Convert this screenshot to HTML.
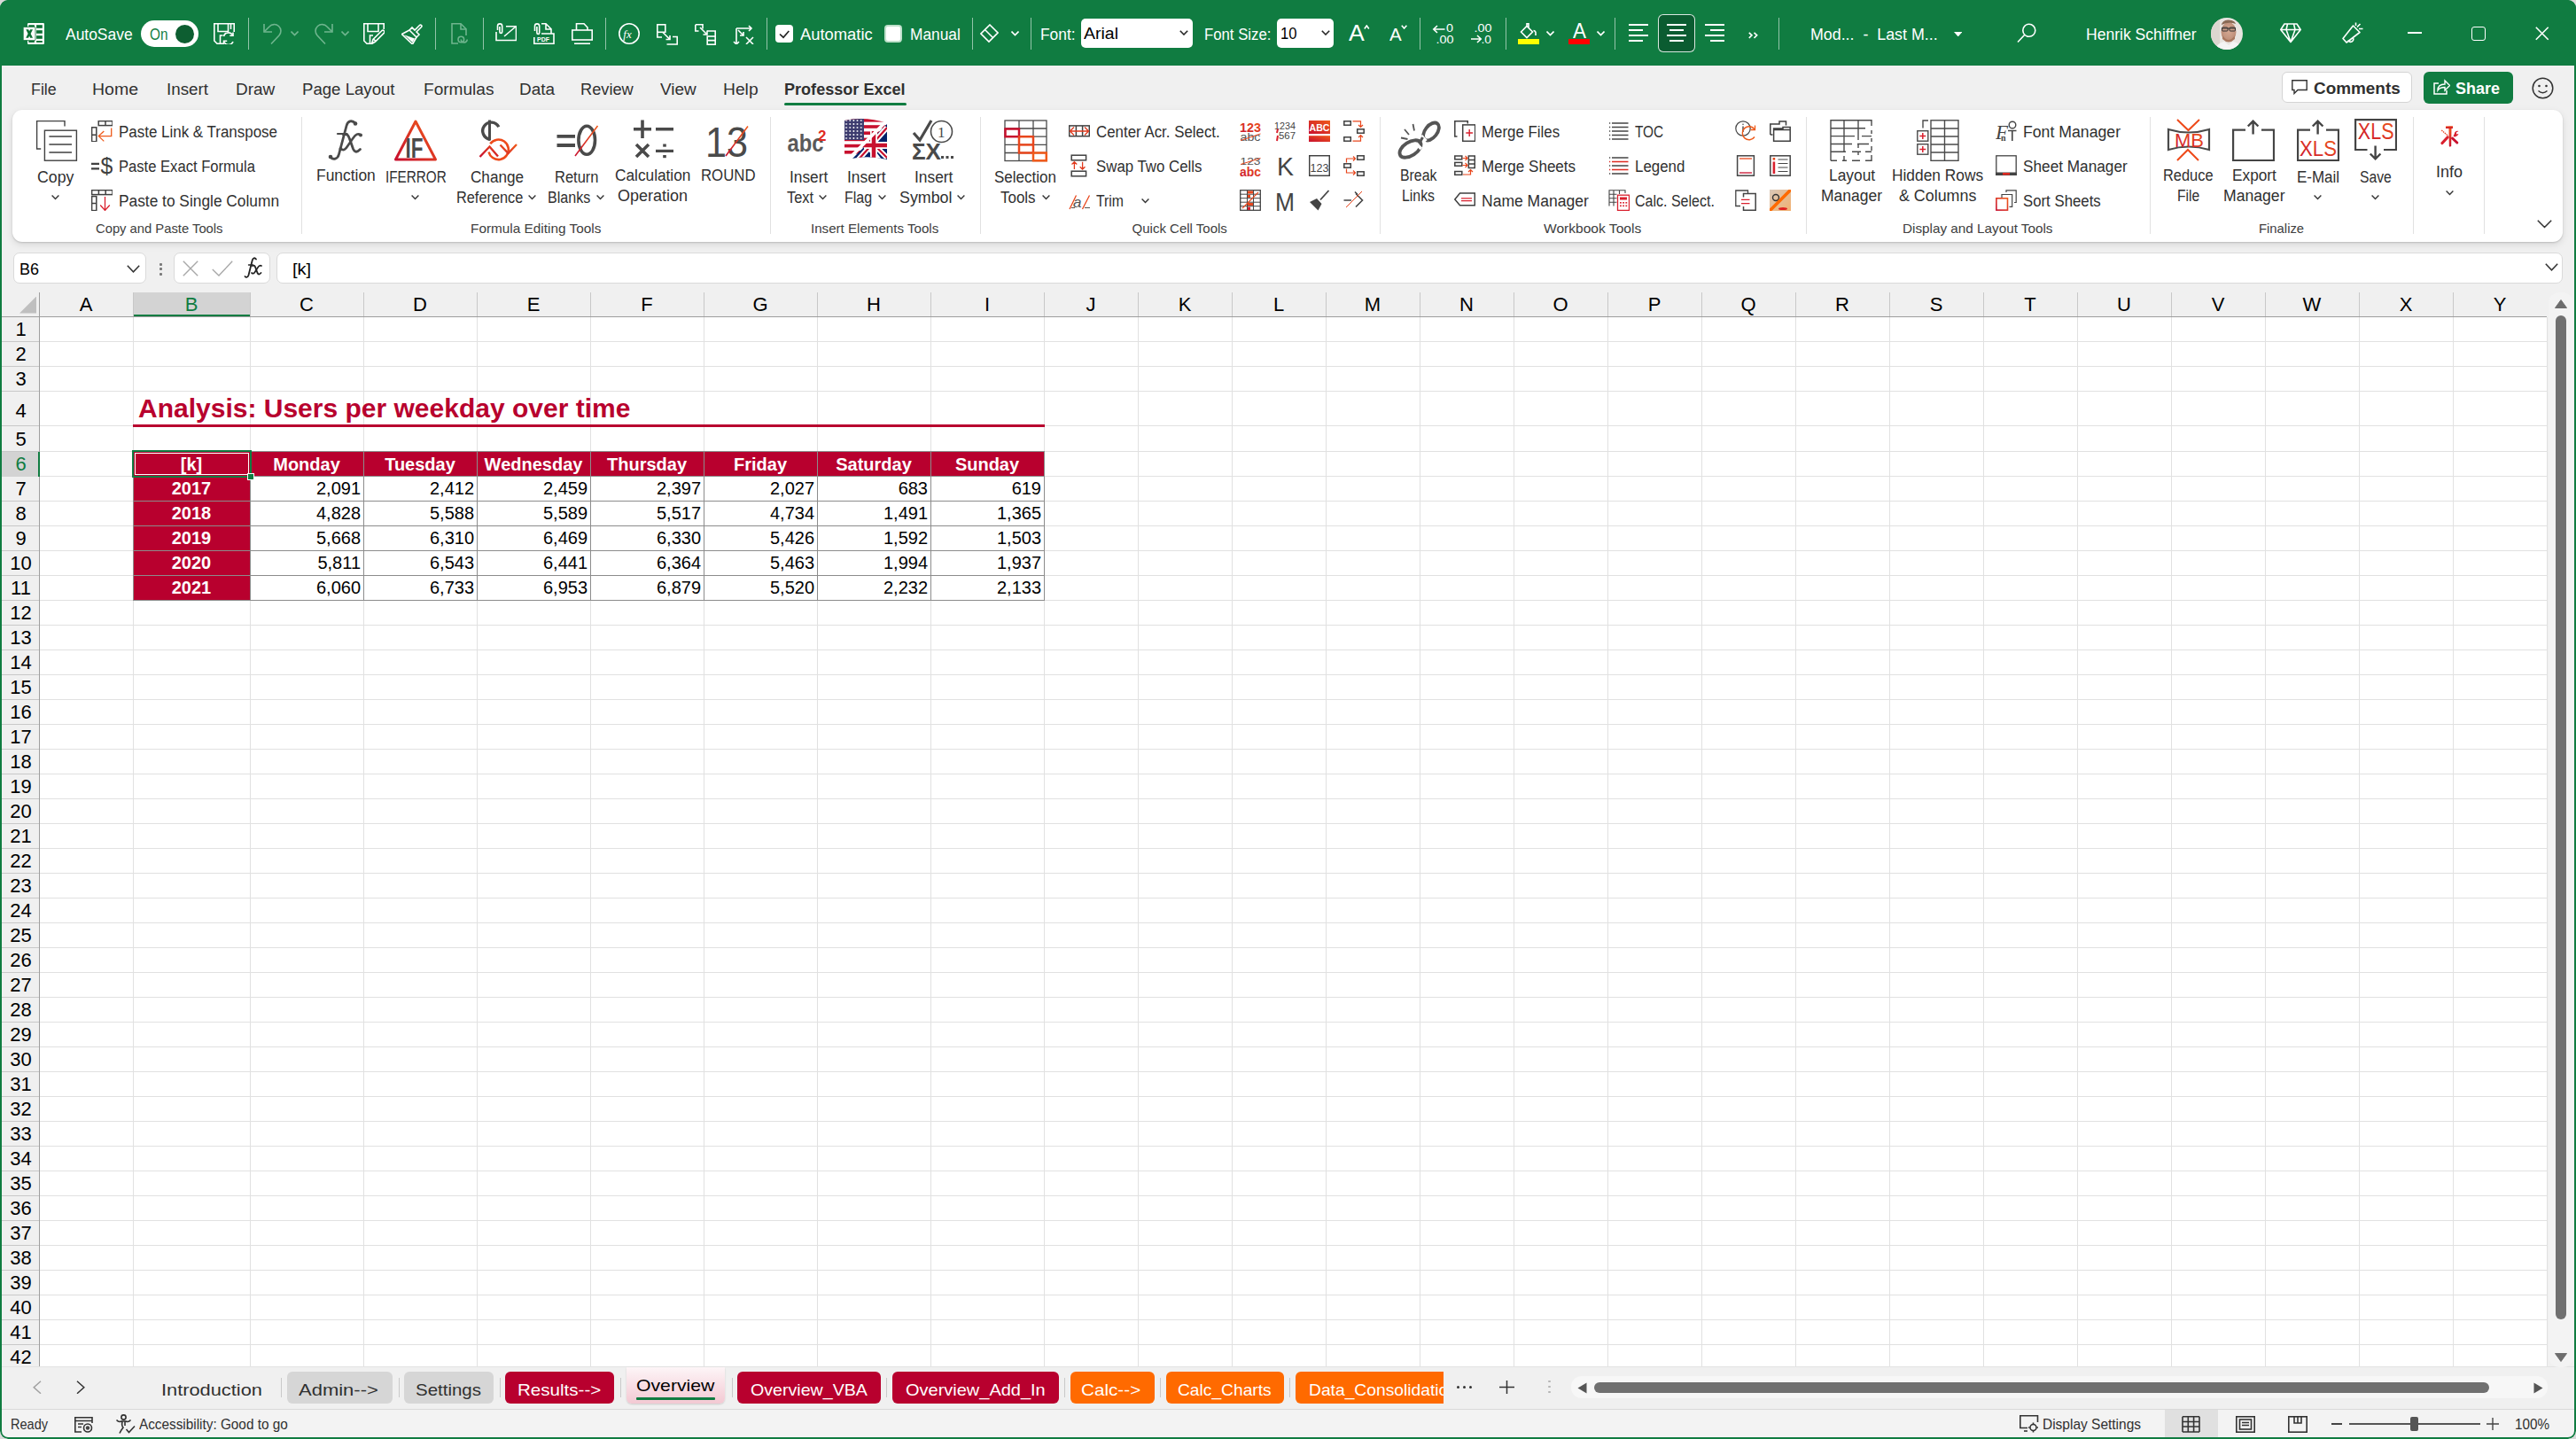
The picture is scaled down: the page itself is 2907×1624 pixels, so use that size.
<!DOCTYPE html>
<html><head><meta charset="utf-8"><title>Excel</title>
<style>
html,body{margin:0;padding:0;}
body{width:2907px;height:1624px;overflow:hidden;background:#d9d9d9;position:relative;font-family:"Liberation Sans",sans-serif;}
#win{position:absolute;left:0;top:0;width:2907px;height:1624px;overflow:hidden;border-radius:9px;background:#f0f0f0;}
#win div,#win svg{position:absolute;}
.t{white-space:pre;line-height:1;}
#frame{position:absolute;left:0;top:0;width:2907px;height:1624px;box-sizing:border-box;border:2px solid #107c41;border-radius:9px;pointer-events:none;}
</style></head><body><div id="win">
<div style="left:0.00px;top:0.00px;width:2907.00px;height:74.00px;background:#107c41;"></div>
<div class="t" style="left:74.20px;top:29.76px;font-size:18px;color:#ffffff;transform:scaleX(0.9686);transform-origin:left top;">AutoSave</div>
<div style="left:159.00px;top:23.00px;width:65.00px;height:30.00px;background:#fff;border-radius:15px;"></div>
<div class="t" style="left:169.00px;top:29.56px;font-size:18px;color:#107c41;transform:scaleX(0.8496);transform-origin:left top;">On</div>
<div style="left:198.00px;top:27.50px;width:21.00px;height:21.00px;background:#0d5e31;border-radius:50%;"></div>
<div style="left:280.40px;top:20.00px;width:1.00px;height:36.00px;background:rgba(255,255,255,0.55);"></div>
<div style="left:491.20px;top:20.00px;width:1.00px;height:36.00px;background:rgba(255,255,255,0.55);"></div>
<div style="left:544.60px;top:20.00px;width:1.00px;height:36.00px;background:rgba(255,255,255,0.55);"></div>
<div style="left:683.40px;top:20.00px;width:1.00px;height:36.00px;background:rgba(255,255,255,0.55);"></div>
<div style="left:865.10px;top:20.00px;width:1.00px;height:36.00px;background:rgba(255,255,255,0.55);"></div>
<div style="left:1097.40px;top:20.00px;width:1.00px;height:36.00px;background:rgba(255,255,255,0.55);"></div>
<div style="left:1162.60px;top:20.00px;width:1.00px;height:36.00px;background:rgba(255,255,255,0.55);"></div>
<div style="left:1602.40px;top:20.00px;width:1.00px;height:36.00px;background:rgba(255,255,255,0.55);"></div>
<div style="left:1698.50px;top:20.00px;width:1.00px;height:36.00px;background:rgba(255,255,255,0.55);"></div>
<div style="left:1822.00px;top:20.00px;width:1.00px;height:36.00px;background:rgba(255,255,255,0.55);"></div>
<div style="left:2006.50px;top:20.00px;width:1.00px;height:36.00px;background:rgba(255,255,255,0.55);"></div>
<div class="t" style="left:903.30px;top:29.76px;font-size:18px;color:#ffffff;transform:scaleX(1.0209);transform-origin:left top;">Automatic</div>
<div class="t" style="left:1026.60px;top:29.76px;font-size:18px;color:#ffffff;transform:scaleX(0.9622);transform-origin:left top;">Manual</div>
<div class="t" style="left:1174.00px;top:29.76px;font-size:18px;color:#ffffff;transform:scaleX(0.9655);transform-origin:left top;">Font:</div>
<div style="left:1220.00px;top:20.50px;width:125.60px;height:33.00px;background:#fff;border-radius:5px;"></div>
<div class="t" style="left:1223.00px;top:28.76px;font-size:18px;color:#000;transform:scaleX(1.0831);transform-origin:left top;">Arial</div>
<div class="t" style="left:1359.30px;top:29.76px;font-size:18px;color:#ffffff;transform:scaleX(0.9305);transform-origin:left top;">Font Size:</div>
<div style="left:1441.00px;top:20.50px;width:63.60px;height:33.00px;background:#fff;border-radius:5px;"></div>
<div class="t" style="left:1444.50px;top:28.76px;font-size:18px;color:#000;transform:scaleX(0.9241);transform-origin:left top;">10</div>
<div class="t" style="left:2043.00px;top:29.76px;font-size:18px;color:#ffffff;transform:scaleX(0.9902);transform-origin:left top;">Mod...  -  Last M...</div>
<div class="t" style="left:2354.00px;top:30.06px;font-size:18px;color:#ffffff;transform:scaleX(0.9756);transform-origin:left top;">Henrik Schiffner</div>
<svg style="left:26.00px;top:26.00px;" width="24.00" height="24.00" viewBox="0 0 24 24"><rect x="5" y="0" width="19" height="24" rx="1.2" fill="#fff"/><g fill="#0b7033"><rect x="6.3" y="2.2" width="6.6" height="2"/><rect x="15.1" y="2.2" width="6.7" height="3.6"/><rect x="15.1" y="8.2" width="6.7" height="3.6"/><rect x="15.1" y="14.2" width="6.7" height="3.6"/><rect x="15.1" y="20" width="6.7" height="1.9"/><rect x="6.3" y="20" width="6.6" height="1.9"/></g><rect x="0.2" y="4.4" width="13.8" height="15.2" rx="1" fill="#fff" stroke="#0b7033" stroke-width="0.8"/><path d="M3.3,7.2 L6.2,7.2 L7.1,9.2 L8.1,7.2 L11,7.2 L8.6,12 L11,16.8 L8.1,16.8 L7.1,14.6 L6.1,16.8 L3.2,16.8 L5.6,12 Z" fill="#0b7033"/></svg>
<svg style="left:241.00px;top:26.00px;" width="24.00" height="24.00" viewBox="0 0 24 24"><path d="M11,23.2 H4 L0.8,20 V0.8 H23.2 V10" fill="none" stroke="#fff" stroke-width="1.6"/><path d="M5,0.8 V9.5 H16.5 V0.8 M19.5,0.8 V7" fill="none" stroke="#fff" stroke-width="1.6"/><path d="M7.5,23 V14 H10.5" fill="none" stroke="#fff" stroke-width="1.6"/><path d="M11.5,15 A5.5,5.5 0 0 1 21.5,13.5 M22,21 A5.5,5.5 0 0 1 12,21.5" fill="none" stroke="#fff" stroke-width="1.6"/><path d="M22,10.5 V14.2 H18.3 M11.5,24 V20.3 H15.2" fill="none" stroke="#fff" stroke-width="1.6"/></svg>
<svg style="left:297.00px;top:26.00px;" width="22.00" height="24.00" viewBox="0 0 22 24"><path d="M1,1 V10 H10" fill="none" stroke="#6fb58e" stroke-width="1.6"/><path d="M1.5,9.5 L7,4 A7,7 0 0 1 18,14 L9,23.5" fill="none" stroke="#6fb58e" stroke-width="1.6"/></svg>
<svg style="left:328.00px;top:34.50px;" width="9.00" height="6.00" viewBox="0 0 9 6"><path d="M0.5,0.5 L4.5,4.5 L8.5,0.5" fill="none" stroke="#6fb58e" stroke-width="1.6"/></svg>
<svg style="left:354.00px;top:26.00px;" width="22.00" height="24.00" viewBox="0 0 22 24"><path d="M21,1 V10 H12" fill="none" stroke="#6fb58e" stroke-width="1.6"/><path d="M20.5,9.5 L15,4 A7,7 0 0 0 4,14 L13,23.5" fill="none" stroke="#6fb58e" stroke-width="1.6"/></svg>
<svg style="left:385.00px;top:34.50px;" width="9.00" height="6.00" viewBox="0 0 9 6"><path d="M0.5,0.5 L4.5,4.5 L8.5,0.5" fill="none" stroke="#6fb58e" stroke-width="1.6"/></svg>
<svg style="left:410.00px;top:26.00px;" width="24.00" height="24.00" viewBox="0 0 24 24"><path d="M9,23.2 H4 L0.8,20 V0.8 H23.2 V7" fill="none" stroke="#fff" stroke-width="1.6"/><path d="M5,0.8 V9.5 H17 V0.8" fill="none" stroke="#fff" stroke-width="1.6"/><path d="M7.5,23 V14 H11" fill="none" stroke="#fff" stroke-width="1.6"/><path d="M9.5,23.5 L11,18.5 L21,8.5 A1.8,1.8 0 0 1 23.5,11 L13.5,21 Z M11.5,18 L14,20.5" fill="none" stroke="#fff" stroke-width="1.6"/></svg>
<svg style="left:453.00px;top:26.00px;" width="24.00" height="24.00" viewBox="0 0 24 24"><path d="M0.5,12.5 L9,8 L17,16 L12.5,24 Z" fill="none" stroke="#fff" stroke-width="1.6" stroke-linejoin="round"/><path d="M3,13.2 L15,17.5 L12.5,22 Z" fill="#fff"/><path d="M9,8 L12,5 L15,8 L20.5,2.5 A1.4,1.4 0 0 1 22.5,4.5 L17,10 L20,13 L17,16" fill="none" stroke="#fff" stroke-width="1.6"/></svg>
<svg style="left:509.00px;top:26.40px;" width="22.00" height="24.00" viewBox="0 0 22 24"><path d="M8,23 H1 V0.8 H11 L17,6.8 V14" fill="none" stroke="#6fb58e" stroke-width="1.6"/><path d="M11,1 V7 H17" fill="none" stroke="#6fb58e" stroke-width="1.6"/><path d="M8,18.5 A3.3,3.3 0 1 1 14.6,18.5 A3.3,3.3 0 1 1 8,18.5 M11.3,18.5 A3.3,3.3 0 1 0 18.2,18.5" fill="none" stroke="#6fb58e" stroke-width="1.6"/></svg>
<svg style="left:559.00px;top:26.00px;" width="24.00" height="24.00" viewBox="0 0 24 24"><path d="M1,10 V19.5 H23.5 V3.8 H12" fill="none" stroke="#fff" stroke-width="1.6"/><path d="M10,15 L23,4" fill="none" stroke="#fff" stroke-width="1.6"/><path d="M2.5,8 V3.5 A2.6,2.6 0 0 1 7.7,3.5 V10 A1.4,1.4 0 0 1 4.9,10 V4" fill="none" stroke="#fff" stroke-width="1.6"/></svg>
<svg style="left:602.00px;top:26.00px;" width="24.00" height="24.00" viewBox="0 0 24 24"><path d="M9,0.8 H14 L20,6.8 V12 M14,1 V7 H20" fill="none" stroke="#fff" stroke-width="1.6"/><path d="M0.8,16 V23.2 H23 V12 H9" fill="none" stroke="#fff" stroke-width="1.6"/><path d="M1.5,9 V3.5 A2.6,2.6 0 0 1 6.7,3.5 V11 A1.4,1.4 0 0 1 3.9,11 V4" fill="none" stroke="#fff" stroke-width="1.6"/><text x="4" y="21.3" font-size="7" font-weight="700" fill="#fff" font-family="Liberation Sans">PDF</text></svg>
<svg style="left:645.00px;top:26.00px;" width="24.00" height="24.00" viewBox="0 0 24 24"><path d="M5.5,8 V0.8 H14 L18,5 V8" fill="none" stroke="#fff" stroke-width="1.6"/><rect x="0.8" y="8" width="22.4" height="11" fill="none" stroke="#fff" stroke-width="1.6"/><path d="M3,23.2 H21" fill="none" stroke="#fff" stroke-width="1.6"/></svg>
<svg style="left:698.00px;top:26.00px;" width="24.00" height="24.00" viewBox="0 0 24 24"><circle cx="12" cy="12" r="11.2" fill="none" stroke="#fff" stroke-width="1.6"/><text x="5.3" y="17" font-size="13" font-style="italic" fill="#fff" font-family="Liberation Serif">fx</text></svg>
<svg style="left:741.00px;top:26.50px;" width="24.00" height="24.00" viewBox="0 0 24 24"><rect x="0.8" y="0.8" width="9" height="8.5" fill="none" stroke="#fff" stroke-width="1.6"/><path d="M0.8,9.3 V15 H6 M7,9.5 L15,17.5 M10.5,17.5 H15 V13" fill="none" stroke="#fff" stroke-width="1.6"/><path d="M11.5,23 H23.2 V14.5 H18" fill="none" stroke="#fff" stroke-width="1.6"/></svg>
<svg style="left:784.00px;top:26.50px;" width="24.00" height="24.00" viewBox="0 0 24 24"><path d="M1,0.8 H9 V5.5 M0.8,0.8 V8 H4.5" fill="none" stroke="#fff" stroke-width="1.6"/><path d="M6,4 L14,12 M9.5,12 H14 V7.5" fill="none" stroke="#fff" stroke-width="1.6"/><rect x="14.2" y="14" width="9" height="9.2" fill="none" stroke="#fff" stroke-width="1.6"/><path d="M14.2,18.6 H23.2 M14,8 H23.2 V14" fill="none" stroke="#fff" stroke-width="1.6"/></svg>
<svg style="left:827.00px;top:26.00px;" width="24.00" height="24.00" viewBox="0 0 24 24"><path d="M4,24 V6 M1,21 L4,24 L7,21 M4,6 H21 M18,3 L21,6 L18,9 M6,8 L12,14 M8,14 H12 V10" fill="none" stroke="#fff" stroke-width="1.6"/><path d="M15,16 L23,24 M23,16 L15,24" fill="none" stroke="#fff" stroke-width="1.6"/></svg>
<div style="left:875.00px;top:28.00px;width:20.00px;height:20.00px;background:#fff;border-radius:4px;"></div>
<svg style="left:875.00px;top:28.00px;" width="20.00" height="20.00" viewBox="0 0 20 20"><path d="M5,10.5 L9,14.2 L15.3,7" fill="none" stroke="#242424" stroke-width="1.7"/></svg>
<div style="left:998.20px;top:28.00px;width:19.50px;height:20.00px;background:#fff;border:2px solid #bfe0cb;box-sizing:border-box;border-radius:4px;"></div>
<svg style="left:1106.00px;top:26.50px;" width="21.00" height="23.00" viewBox="0 0 21 23"><path d="M11,1 L20,10 L10,20 L1,11 Z M5.5,6.5 L14.5,15.5" fill="none" stroke="#fff" stroke-width="1.6"/></svg>
<svg style="left:1141.00px;top:35.00px;" width="9.00" height="6.00" viewBox="0 0 9 6"><path d="M0.5,0.5 L4.5,4.5 L8.5,0.5" fill="none" stroke="#fff" stroke-width="1.6"/></svg>
<svg style="left:1331.00px;top:33.50px;" width="10.00" height="6.00" viewBox="0 0 10 6"><path d="M0.8,0.8 L5,5 L9.2,0.8" fill="none" stroke="#262626" stroke-width="1.6"/></svg>
<svg style="left:1491.00px;top:33.50px;" width="10.00" height="6.00" viewBox="0 0 10 6"><path d="M0.8,0.8 L5,5 L9.2,0.8" fill="none" stroke="#262626" stroke-width="1.6"/></svg>
<div class="t" style="left:1521.50px;top:23.79px;font-size:26px;color:#ffffff;transform:scaleX(1.0206);transform-origin:left top;font-weight:300;">A</div>
<svg style="left:1538.50px;top:28.00px;" width="7.00" height="5.00" viewBox="0 0 7 5"><path d="M0.8,4.5 L3.3,1 L5.8,4.5" fill="none" stroke="#fff" stroke-width="1.6"/></svg>
<div class="t" style="left:1567.50px;top:28.02px;font-size:21px;color:#ffffff;transform:scaleX(0.9780);transform-origin:left top;">A</div>
<svg style="left:1580.50px;top:28.00px;" width="8.00" height="5.00" viewBox="0 0 8 5"><path d="M0.8,0.8 L3.6,4 L6.4,0.8" fill="none" stroke="#fff" stroke-width="1.6"/></svg>
<svg style="left:1615.00px;top:25.00px;" width="27.00" height="25.00" viewBox="0 0 27 25"><path d="M3,8 H15.5 M7,4 L2.8,8 L7,12" fill="none" stroke="#fff" stroke-width="1.6"/><text x="17" y="10.5" font-size="13" fill="#fff" font-family="Liberation Sans" textLength="8" lengthAdjust="spacingAndGlyphs">0</text><text x="5.5" y="23.5" font-size="13" fill="#fff" font-family="Liberation Sans" textLength="20" lengthAdjust="spacingAndGlyphs">.00</text></svg>
<svg style="left:1658.00px;top:25.00px;" width="27.00" height="25.00" viewBox="0 0 27 25"><text x="5.5" y="10.5" font-size="13" fill="#fff" font-family="Liberation Sans" textLength="20" lengthAdjust="spacingAndGlyphs">.00</text><path d="M2,19 H13 M9,15 L13.2,19 L9,23" fill="none" stroke="#fff" stroke-width="1.6"/><text x="13.5" y="23.5" font-size="13" fill="#fff" font-family="Liberation Sans" textLength="11.5" lengthAdjust="spacingAndGlyphs">.0</text></svg>
<svg style="left:1713.00px;top:26.00px;" width="24.00" height="18.00" viewBox="0 0 24 18"><path d="M3.5,10 L10,3.5 L16.5,10 L10,16.5 Z M10,3.5 V0.8 H12 V6" fill="none" stroke="#fff" stroke-width="1.6"/><path d="M17.5,8.5 A2.5,2.5 0 0 1 20,11.5 L20,14" fill="none" stroke="#fff" stroke-width="1.6"/></svg>
<div style="left:1713.00px;top:44.00px;width:24.00px;height:6.00px;background:#ffff00;"></div>
<svg style="left:1745.00px;top:35.00px;" width="9.00" height="6.00" viewBox="0 0 9 6"><path d="M0.5,0.5 L4.5,4.5 L8.5,0.5" fill="none" stroke="#fff" stroke-width="1.6"/></svg>
<div class="t" style="left:1774.50px;top:24.03px;font-size:23px;color:#ffffff;transform:scaleX(0.9777);transform-origin:left top;">A</div>
<div style="left:1770.00px;top:44.00px;width:24.00px;height:6.00px;background:#ff0000;"></div>
<svg style="left:1802.00px;top:35.00px;" width="9.00" height="6.00" viewBox="0 0 9 6"><path d="M0.5,0.5 L4.5,4.5 L8.5,0.5" fill="none" stroke="#fff" stroke-width="1.6"/></svg>
<div style="left:1838.00px;top:27.20px;width:22.00px;height:1.80px;background:#fff;"></div>
<div style="left:1838.00px;top:33.20px;width:16.00px;height:1.80px;background:#fff;"></div>
<div style="left:1838.00px;top:39.20px;width:22.00px;height:1.80px;background:#fff;"></div>
<div style="left:1838.00px;top:45.20px;width:16.00px;height:1.80px;background:#fff;"></div>
<div style="left:1871.00px;top:16.20px;width:42.00px;height:42.60px;background:#0b5c31;border:1.3px solid rgba(255,255,255,0.85);box-sizing:border-box;border-radius:6px;"></div>
<div style="left:1881.00px;top:27.20px;width:22.00px;height:1.80px;background:#fff;"></div>
<div style="left:1884.00px;top:33.20px;width:16.00px;height:1.80px;background:#fff;"></div>
<div style="left:1881.00px;top:39.20px;width:22.00px;height:1.80px;background:#fff;"></div>
<div style="left:1884.00px;top:45.20px;width:16.00px;height:1.80px;background:#fff;"></div>
<div style="left:1924.00px;top:27.20px;width:22.00px;height:1.80px;background:#fff;"></div>
<div style="left:1930.00px;top:33.20px;width:16.00px;height:1.80px;background:#fff;"></div>
<div style="left:1924.00px;top:39.20px;width:22.00px;height:1.80px;background:#fff;"></div>
<div style="left:1930.00px;top:45.20px;width:16.00px;height:1.80px;background:#fff;"></div>
<svg style="left:1972.50px;top:35.50px;" width="11.00" height="8.00" viewBox="0 0 11 8"><path d="M0.8,0.8 L4,3.8 L0.8,6.8 M6.5,0.8 L9.7,3.8 L6.5,6.8" fill="none" stroke="#fff" stroke-width="1.6"/></svg>
<svg style="left:2204.70px;top:35.90px;" width="9.40" height="5.40" viewBox="0 0 9.4 5.4"><path d="M0,0 H9.4 L4.7,5.4 Z" fill="#fff"/></svg>
<svg style="left:2276.00px;top:26.00px;" width="23.00" height="23.00" viewBox="0 0 23 23"><circle cx="13.8" cy="8.3" r="7" fill="none" stroke="#fff" stroke-width="1.6"/><path d="M8.8,13.3 L1,21.5" fill="none" stroke="#fff" stroke-width="1.6"/></svg>
<svg style="left:2495.00px;top:19.60px;" width="36.00" height="36.00" viewBox="0 0 36 36"><defs><clipPath id="av"><circle cx="18" cy="18" r="18"/></clipPath><radialGradient id="skin" cx="0.5" cy="0.45" r="0.6"><stop offset="0" stop-color="#d6a993"/><stop offset="1" stop-color="#b98a74"/></radialGradient></defs><g clip-path="url(#av)"><rect width="36" height="36" fill="#e9e5e1"/><rect x="0" y="0" width="10" height="36" fill="#dcd6d0"/><ellipse cx="20" cy="16" rx="8.5" ry="11" fill="url(#skin)"/><path d="M11.5,9 Q13,2 20,2.5 Q28,2.5 28.5,9 L28,7 Q20,4 12,8 Z" fill="#8a6a55"/><path d="M12,12 H28" stroke="#3a3a3a" stroke-width="1.2"/><rect x="12.5" y="11" width="6.5" height="4" rx="1" fill="none" stroke="#333" stroke-width="1"/><rect x="21" y="11" width="6.5" height="4" rx="1" fill="none" stroke="#333" stroke-width="1"/><path d="M13,20 Q20,30 27,20 L27,24 Q20,31 13,24 Z" fill="#a9785f"/><path d="M4,36 Q8,28 15,27 L20,31 L25,27 Q32,28 36,36 Z" fill="#f4f4f4"/></g></svg>
<svg style="left:2573.00px;top:25.70px;" width="24.00" height="23.00" viewBox="0 0 24 23"><path d="M5,1 H19 L23.2,7.5 L12,21.5 L0.8,7.5 Z M0.8,7.5 H23.2 M8.5,1 L7,7.5 L12,21.5 L17,7.5 L15.5,1" fill="none" stroke="#fff" stroke-width="1.6" stroke-linejoin="round"/></svg>
<svg style="left:2643.00px;top:25.00px;" width="24.00" height="24.00" viewBox="0 0 24 24"><path d="M1,18.5 L12.5,4 L20,11.5 L5,23 Z" fill="none" stroke="#fff" stroke-width="1.6" stroke-linejoin="round"/><path d="M7,20.5 A3,3 0 0 0 12.5,18" fill="none" stroke="#fff" stroke-width="1.6"/><path d="M17,5.5 L20.5,2 M19,7.5 H23.5 M15.5,4 V0.5" fill="none" stroke="#fff" stroke-width="1.6"/></svg>
<div style="left:2717.00px;top:36.20px;width:16.00px;height:1.60px;background:#fff;"></div>
<div style="left:2789.00px;top:30.20px;width:15.50px;height:15.50px;border:1.5px solid #fff;box-sizing:border-box;border-radius:3px;"></div>
<svg style="left:2861.00px;top:30.20px;" width="15.50" height="15.50" viewBox="0 0 15.5 15.5"><path d="M0.8,0.8 L14.7,14.7 M14.7,0.8 L0.8,14.7" fill="none" stroke="#fff" stroke-width="1.6"/></svg>
<div class="t" style="left:35.00px;top:92.26px;font-size:18px;color:#303030;transform:scaleX(0.9896);transform-origin:left top;">File</div>
<div class="t" style="left:103.70px;top:92.26px;font-size:18px;color:#303030;transform:scaleX(1.0831);transform-origin:left top;">Home</div>
<div class="t" style="left:187.60px;top:92.26px;font-size:18px;color:#303030;transform:scaleX(1.0419);transform-origin:left top;">Insert</div>
<div class="t" style="left:266.00px;top:92.26px;font-size:18px;color:#303030;transform:scaleX(1.0523);transform-origin:left top;">Draw</div>
<div class="t" style="left:340.80px;top:92.26px;font-size:18px;color:#303030;transform:scaleX(1.0339);transform-origin:left top;">Page Layout</div>
<div class="t" style="left:477.50px;top:92.26px;font-size:18px;color:#303030;transform:scaleX(1.0599);transform-origin:left top;">Formulas</div>
<div class="t" style="left:586.00px;top:92.26px;font-size:18px;color:#303030;transform:scaleX(1.0521);transform-origin:left top;">Data</div>
<div class="t" style="left:655.30px;top:92.26px;font-size:18px;color:#303030;transform:scaleX(1.0116);transform-origin:left top;">Review</div>
<div class="t" style="left:745.30px;top:92.26px;font-size:18px;color:#303030;transform:scaleX(1.0520);transform-origin:left top;">View</div>
<div class="t" style="left:816.40px;top:92.26px;font-size:18px;color:#303030;transform:scaleX(1.0697);transform-origin:left top;">Help</div>
<div class="t" style="left:885.40px;top:92.26px;font-size:18px;color:#303030;font-weight:700;transform:scaleX(1.0039);transform-origin:left top;">Professor Excel</div>
<div style="left:885.00px;top:115.50px;width:138.00px;height:3.00px;background:#107c41;border-radius:2px;"></div>
<div style="left:2574.50px;top:81.30px;width:147.30px;height:35.10px;background:#fff;border:1px solid #d4d4d4;box-sizing:border-box;border-radius:6px;"></div>
<div class="t" style="left:2610.60px;top:91.26px;font-size:18px;color:#303030;font-weight:700;transform:scaleX(1.0504);transform-origin:left top;">Comments</div>
<div style="left:2735.00px;top:81.30px;width:100.60px;height:35.30px;background:#107c41;border-radius:6px;"></div>
<div class="t" style="left:2771.30px;top:91.26px;font-size:18px;color:#fff;font-weight:700;transform:scaleX(0.9975);transform-origin:left top;">Share</div>
<div style="left:14.00px;top:124.00px;width:2878.00px;height:149.00px;background:#fff;border-radius:11px;box-shadow:0 1px 2px rgba(0,0,0,0.16),0 3px 9px rgba(0,0,0,0.10);"></div>
<div style="left:340.40px;top:132.00px;width:1.00px;height:132.00px;background:#e1e1e1;"></div>
<div style="left:868.50px;top:132.00px;width:1.00px;height:132.00px;background:#e1e1e1;"></div>
<div style="left:1106.40px;top:132.00px;width:1.00px;height:132.00px;background:#e1e1e1;"></div>
<div style="left:1557.40px;top:132.00px;width:1.00px;height:132.00px;background:#e1e1e1;"></div>
<div style="left:2038.30px;top:132.00px;width:1.00px;height:132.00px;background:#e1e1e1;"></div>
<div style="left:2425.50px;top:132.00px;width:1.00px;height:132.00px;background:#e1e1e1;"></div>
<div style="left:2723.40px;top:132.00px;width:1.00px;height:132.00px;background:#e1e1e1;"></div>
<div style="left:2803.00px;top:132.00px;width:1.00px;height:132.00px;background:#e1e1e1;"></div>
<div class="t" style="left:107.50px;top:249.70px;font-size:15px;color:#404040;transform:scaleX(0.9853);transform-origin:left top;">Copy and Paste Tools</div>
<div class="t" style="left:530.70px;top:249.70px;font-size:15px;color:#404040;transform:scaleX(1.0233);transform-origin:left top;">Formula Editing Tools</div>
<div class="t" style="left:915.00px;top:249.70px;font-size:15px;color:#404040;transform:scaleX(1.0076);transform-origin:left top;">Insert Elements Tools</div>
<div class="t" style="left:1277.60px;top:249.70px;font-size:15px;color:#404040;">Quick Cell Tools</div>
<div class="t" style="left:1742.00px;top:249.70px;font-size:15px;color:#404040;transform:scaleX(1.0381);transform-origin:left top;">Workbook Tools</div>
<div class="t" style="left:2146.70px;top:249.70px;font-size:15px;color:#404040;transform:scaleX(1.0181);transform-origin:left top;">Display and Layout Tools</div>
<div class="t" style="left:2548.60px;top:249.70px;font-size:15px;color:#404040;transform:scaleX(0.9887);transform-origin:left top;">Finalize</div>
<div class="t" style="left:42.00px;top:190.76px;font-size:18px;color:#303030;transform:scaleX(0.9853);transform-origin:left top;">Copy</div>
<div class="t" style="left:356.70px;top:188.76px;font-size:18px;color:#303030;transform:scaleX(0.9677);transform-origin:left top;">Function</div>
<div class="t" style="left:434.60px;top:190.76px;font-size:18px;color:#303030;transform:scaleX(0.8494);transform-origin:left top;">IFERROR</div>
<div class="t" style="left:531.00px;top:190.76px;font-size:18px;color:#303030;transform:scaleX(0.9517);transform-origin:left top;">Change</div>
<div class="t" style="left:625.70px;top:190.76px;font-size:18px;color:#303030;transform:scaleX(0.9163);transform-origin:left top;">Return</div>
<div class="t" style="left:694.00px;top:188.76px;font-size:18px;color:#303030;transform:scaleX(0.9590);transform-origin:left top;">Calculation</div>
<div class="t" style="left:697.00px;top:212.46px;font-size:18px;color:#303030;">Operation</div>
<div class="t" style="left:790.50px;top:188.76px;font-size:18px;color:#303030;transform:scaleX(0.9318);transform-origin:left top;">ROUND</div>
<div class="t" style="left:890.60px;top:190.76px;font-size:18px;color:#303030;transform:scaleX(0.9597);transform-origin:left top;">Insert</div>
<div class="t" style="left:955.50px;top:190.76px;font-size:18px;color:#303030;transform:scaleX(0.9664);transform-origin:left top;">Insert</div>
<div class="t" style="left:1031.60px;top:190.76px;font-size:18px;color:#303030;transform:scaleX(0.9641);transform-origin:left top;">Insert</div>
<div class="t" style="left:1122.40px;top:190.76px;font-size:18px;color:#303030;transform:scaleX(0.9440);transform-origin:left top;">Selection</div>
<div class="t" style="left:1129.40px;top:214.46px;font-size:18px;color:#303030;transform:scaleX(0.9424);transform-origin:left top;">Tools</div>
<div class="t" style="left:1580.00px;top:188.76px;font-size:18px;color:#303030;transform:scaleX(0.8805);transform-origin:left top;">Break</div>
<div class="t" style="left:1582.00px;top:212.46px;font-size:18px;color:#303030;transform:scaleX(0.8806);transform-origin:left top;">Links</div>
<div class="t" style="left:2063.50px;top:188.76px;font-size:18px;color:#303030;transform:scaleX(0.9641);transform-origin:left top;">Layout</div>
<div class="t" style="left:2055.00px;top:212.46px;font-size:18px;color:#303030;transform:scaleX(0.9713);transform-origin:left top;">Manager</div>
<div class="t" style="left:2134.80px;top:188.76px;font-size:18px;color:#303030;transform:scaleX(0.9631);transform-origin:left top;">Hidden Rows</div>
<div class="t" style="left:2142.70px;top:212.46px;font-size:18px;color:#303030;transform:scaleX(0.9917);transform-origin:left top;">&amp; Columns</div>
<div class="t" style="left:2441.40px;top:188.76px;font-size:18px;color:#303030;transform:scaleX(0.9123);transform-origin:left top;">Reduce</div>
<div class="t" style="left:2457.40px;top:212.46px;font-size:18px;color:#303030;transform:scaleX(0.8689);transform-origin:left top;">File</div>
<div class="t" style="left:2518.70px;top:188.76px;font-size:18px;color:#303030;transform:scaleX(0.9592);transform-origin:left top;">Export</div>
<div class="t" style="left:2508.50px;top:212.46px;font-size:18px;color:#303030;transform:scaleX(0.9784);transform-origin:left top;">Manager</div>
<div class="t" style="left:2591.70px;top:190.76px;font-size:18px;color:#303030;transform:scaleX(0.9431);transform-origin:left top;">E-Mail</div>
<div class="t" style="left:2662.90px;top:190.76px;font-size:18px;color:#303030;transform:scaleX(0.8726);transform-origin:left top;">Save</div>
<div class="t" style="left:2748.90px;top:185.16px;font-size:18px;color:#303030;transform:scaleX(0.9960);transform-origin:left top;">Info</div>
<div class="t" style="left:514.70px;top:214.46px;font-size:18px;color:#303030;transform:scaleX(0.9068);transform-origin:left top;">Reference</div>
<div class="t" style="left:617.80px;top:214.46px;font-size:18px;color:#303030;transform:scaleX(0.8922);transform-origin:left top;">Blanks</div>
<div class="t" style="left:888.00px;top:214.46px;font-size:18px;color:#303030;transform:scaleX(0.9088);transform-origin:left top;">Text</div>
<div class="t" style="left:952.90px;top:214.46px;font-size:18px;color:#303030;transform:scaleX(0.8882);transform-origin:left top;">Flag</div>
<div class="t" style="left:1014.50px;top:214.46px;font-size:18px;color:#303030;transform:scaleX(0.9914);transform-origin:left top;">Symbol</div>
<div class="t" style="left:133.90px;top:139.76px;font-size:18px;color:#303030;transform:scaleX(0.9416);transform-origin:left top;">Paste Link &amp; Transpose</div>
<div class="t" style="left:134.00px;top:178.56px;font-size:18px;color:#303030;transform:scaleX(0.9219);transform-origin:left top;">Paste Exact Formula</div>
<div class="t" style="left:134.00px;top:217.76px;font-size:18px;color:#303030;transform:scaleX(0.9623);transform-origin:left top;">Paste to Single Column</div>
<div class="t" style="left:1236.50px;top:139.76px;font-size:18px;color:#303030;transform:scaleX(0.9372);transform-origin:left top;">Center Acr. Select.</div>
<div class="t" style="left:1236.50px;top:178.56px;font-size:18px;color:#303030;transform:scaleX(0.9357);transform-origin:left top;">Swap Two Cells</div>
<div class="t" style="left:1236.50px;top:217.76px;font-size:18px;color:#303030;transform:scaleX(0.8778);transform-origin:left top;">Trim</div>
<div class="t" style="left:1671.90px;top:139.76px;font-size:18px;color:#303030;transform:scaleX(0.9370);transform-origin:left top;">Merge Files</div>
<div class="t" style="left:1671.90px;top:178.56px;font-size:18px;color:#303030;transform:scaleX(0.9469);transform-origin:left top;">Merge Sheets</div>
<div class="t" style="left:1671.90px;top:217.76px;font-size:18px;color:#303030;transform:scaleX(0.9730);transform-origin:left top;">Name Manager</div>
<div class="t" style="left:1845.40px;top:139.76px;font-size:18px;color:#303030;transform:scaleX(0.8548);transform-origin:left top;">TOC</div>
<div class="t" style="left:1845.40px;top:178.56px;font-size:18px;color:#303030;transform:scaleX(0.9374);transform-origin:left top;">Legend</div>
<div class="t" style="left:1845.40px;top:217.76px;font-size:18px;color:#303030;transform:scaleX(0.8898);transform-origin:left top;">Calc. Select.</div>
<div class="t" style="left:2283.00px;top:139.76px;font-size:18px;color:#303030;transform:scaleX(0.9817);transform-origin:left top;">Font Manager</div>
<div class="t" style="left:2283.00px;top:178.56px;font-size:18px;color:#303030;transform:scaleX(0.9563);transform-origin:left top;">Sheet Manager</div>
<div class="t" style="left:2283.00px;top:217.76px;font-size:18px;color:#303030;transform:scaleX(0.9325);transform-origin:left top;">Sort Sheets</div>
<svg style="left:40.00px;top:135.00px;" width="48.00" height="48.00" viewBox="0 0 48 48"><path d="M6.2,33 H1.6 V1.6 H33 V7.5" fill="none" stroke="#404040" stroke-width="1.4"/><rect x="10.4" y="12.2" width="36" height="34" fill="none" stroke="#404040" stroke-width="1.4"/><path d="M15.4,19 H41 M15.4,28 H41 M15.4,37 H41" fill="none" stroke="#404040" stroke-width="1.4"/></svg>
<svg style="left:58.00px;top:219.50px;" width="9.00" height="6.00" viewBox="0 0 9 6"><path d="M0.6,0.6 L4.5,4.5 L8.4,0.6" fill="none" stroke="#333" stroke-width="1.4"/></svg>
<svg style="left:103.00px;top:136.00px;" width="24.00" height="24.00" viewBox="0 0 24 24"><rect x="8.2" y="0.6" width="15.8" height="5" fill="none" stroke="#404040" stroke-width="1.5"/><path d="M16,0.6 V5.6" fill="none" stroke="#404040" stroke-width="1.5"/><rect x="0.6" y="7.8" width="5.2" height="16" fill="none" stroke="#404040" stroke-width="1.5"/><path d="M0.6,16.2 H5.8" fill="none" stroke="#404040" stroke-width="1.5"/><path d="M22.7,8.4 V17.6 H8.3 M14.3,12 L8.3,17.6 L14.3,23.4" fill="none" stroke="#ee5a1a" stroke-width="1.3"/></svg>
<svg style="left:103.00px;top:174.00px;" width="24.00" height="26.00" viewBox="0 0 24 26"><path d="M0,10.9 H9 M0,16.4 H9" fill="none" stroke="#404040" stroke-width="2.2"/><text x="10.5" y="22" font-size="25" fill="#404040" font-family="Liberation Sans">$</text></svg>
<svg style="left:103.00px;top:214.00px;" width="24.00" height="24.00" viewBox="0 0 24 24"><rect x="0.6" y="0.6" width="23.4" height="5" fill="none" stroke="#404040" stroke-width="1.5"/><path d="M8.4,0.6 V5.6 M16.2,0.6 V5.6" fill="none" stroke="#404040" stroke-width="1.5"/><rect x="0.6" y="7.6" width="5.2" height="16" fill="none" stroke="#404040" stroke-width="1.5"/><path d="M0.6,15.6 H5.8" fill="none" stroke="#404040" stroke-width="1.5"/><path d="M15.5,8 V23.4 M10.2,17.5 L15.5,23.4 L20.8,17.5" fill="none" stroke="#d9202e" stroke-width="1.3"/></svg>
<svg style="left:368.00px;top:134.00px;" width="44.00" height="48.00" viewBox="0 0 44 48"><g fill="none" stroke="#4a4a4a" stroke-linecap="round"><path d="M33,5 C29,1 24.5,2.5 23,8 L14.5,40 C13,46 8,46.5 5,43.5" stroke-width="2.8"/><path d="M13,17 H23.5" stroke-width="2.2"/><path d="M19.5,18 C23.5,16.5 25,18 27,24 L30.5,34 C32.5,38.5 35,38 38.5,34.5" stroke-width="2.8"/><path d="M39,18.5 C36,16 33.5,17.5 30,22.5 L24.5,30.5 C22,34.5 20,36.5 16.5,34" stroke-width="2.6"/></g><circle cx="33" cy="5.5" r="2.3" fill="#4a4a4a"/><circle cx="5" cy="43" r="2.3" fill="#4a4a4a"/><circle cx="39" cy="18.5" r="2" fill="#4a4a4a"/><circle cx="16.5" cy="34" r="2" fill="#4a4a4a"/></svg>
<svg style="left:444.00px;top:134.00px;" width="50.00" height="49.00" viewBox="0 0 50 49"><defs><linearGradient id="g1" x1="0" y1="1" x2="1" y2="0"><stop offset="0" stop-color="#c8102e"/><stop offset="1" stop-color="#f05a1a"/></linearGradient></defs><path d="M25,3 L47.5,46 H2.5 Z" fill="none" stroke="url(#g1)" stroke-width="3" stroke-linejoin="round"/><text x="13.5" y="43.8" font-size="32" font-weight="700" fill="#4a4a4a" font-family="Liberation Sans" textLength="20" lengthAdjust="spacingAndGlyphs">IF</text></svg>
<svg style="left:538.00px;top:134.00px;" width="48.00" height="48.00" viewBox="0 0 48 48"><path d="M24.8,9.2 A9.6,9.6 0 1 0 15,23.2" fill="none" stroke="#4a4a4a" stroke-width="3.4"/><path d="M14.5,1.5 V24.5" stroke="#4a4a4a" stroke-width="3"/><defs><linearGradient id="gcr" x1="0" y1="1" x2="1" y2="0"><stop offset="0" stop-color="#c8102e"/><stop offset="1" stop-color="#f05a1a"/></linearGradient></defs><circle cx="24.5" cy="34.8" r="11.3" fill="none" stroke="#ee4a1a" stroke-width="2.6" stroke-dasharray="61 10" transform="rotate(215 24.5 34.8)"/><path d="M3.5,43 L14.5,31.5 L24,42.5 M26.5,29.5 L35.5,39 L45,29" fill="none" stroke="url(#gcr)" stroke-width="2.4"/></svg>
<svg style="left:627.00px;top:140.00px;" width="50.00" height="38.00" viewBox="0 0 50 38"><path d="M1.5,13.8 H22 M1.5,24 H22" fill="none" stroke="#4a4a4a" stroke-width="3.8"/><ellipse cx="35.2" cy="18.3" rx="9.3" ry="16" fill="none" stroke="#4a4a4a" stroke-width="3.6"/><defs><linearGradient id="g2" x1="0" y1="1" x2="1" y2="0"><stop offset="0" stop-color="#c8102e"/><stop offset="1" stop-color="#f05a1a"/></linearGradient></defs><path d="M22,36 L47.5,2" stroke="url(#g2)" stroke-width="1.6"/></svg>
<svg style="left:713.00px;top:133.00px;" width="50.00" height="48.00" viewBox="0 0 50 48"><path d="M12,2.5 V23 M2,12.7 H22 M27,12.7 H47" fill="none" stroke="#4a4a4a" stroke-width="3.6"/><path d="M5,30 L19,44 M19,30 L5,44" fill="none" stroke="#4a4a4a" stroke-width="3.6"/><path d="M27,37.4 H47" fill="none" stroke="#4a4a4a" stroke-width="3.2"/><rect x="35.2" y="29.5" width="3.6" height="3.2" fill="#4a4a4a"/><rect x="35.2" y="42" width="3.6" height="3.2" fill="#4a4a4a"/></svg>
<svg style="left:796.00px;top:140.00px;" width="50.00" height="38.00" viewBox="0 0 50 38"><text x="0" y="36.5" font-size="48" fill="#4a4a4a" font-family="Liberation Sans" textLength="48" lengthAdjust="spacingAndGlyphs">13</text><defs><linearGradient id="g3" x1="0" y1="1" x2="1" y2="0"><stop offset="0" stop-color="#c8102e"/><stop offset="1" stop-color="#f05a1a"/></linearGradient></defs><path d="M23,36 L48,2.5" stroke="url(#g3)" stroke-width="1.6"/></svg>
<svg style="left:888.00px;top:144.00px;" width="48.00" height="30.00" viewBox="0 0 48 30"><text x="0.5" y="27.3" font-size="28" font-weight="700" fill="#5a5a5a" font-family="Liberation Sans" textLength="41" lengthAdjust="spacingAndGlyphs">abc</text><text x="35" y="14.5" font-size="17" font-weight="700" fill="#e02a20" font-family="Liberation Sans">2</text></svg>
<svg style="left:953.00px;top:134.00px;" width="48.00" height="48.00" viewBox="0 0 48 48"><defs><clipPath id="fc"><path d="M0,2 Q24,-3 48,5 V46 Q24,40 0,47 Z"/></clipPath><pattern id="stars" width="4.2" height="4" patternUnits="userSpaceOnUse"><circle cx="2" cy="2" r="0.9" fill="#fff"/></pattern></defs><g clip-path="url(#fc)"><rect width="48" height="48" fill="#fff"/><path d="M0,0 H48 L0,48 Z" fill="#fff"/><g><rect x="0" y="0" width="48" height="3.6" fill="#c8102e"/><rect x="0" y="7.2" width="48" height="3.6" fill="#c8102e"/><rect x="0" y="14.4" width="48" height="3.6" fill="#c8102e"/><rect x="0" y="21.6" width="48" height="3.6" fill="#c8102e"/><rect x="0" y="28.8" width="48" height="3.6" fill="#c8102e"/><rect x="0" y="36" width="48" height="3.6" fill="#c8102e"/></g><rect x="0" y="0" width="22" height="24" fill="#3c3b6e"/><rect x="0" y="0" width="22" height="24" fill="url(#stars)"/><path d="M48,6 L48,48 L6,48 Z" fill="#012169"/><path d="M48,10 L14,48 M30,26 L48,44 M26,30 L40,48" stroke="#fff" stroke-width="6"/><path d="M48,10 L14,48 M30,26 L48,44" stroke="#c8102e" stroke-width="2.2"/><path d="M33,14 V48 M22,30 H48" stroke="#fff" stroke-width="8"/><path d="M33,14 V48 M22,30 H48" stroke="#c8102e" stroke-width="4.5"/><path d="M48,2 L2,48" stroke="#fff" stroke-width="3.5"/></g></svg>
<svg style="left:1029.00px;top:134.00px;" width="48.00" height="48.00" viewBox="0 0 48 48"><path d="M2,16 L9,24 L22,2" fill="none" stroke="#4a4a4a" stroke-width="3.2"/><circle cx="33.5" cy="14.5" r="12" fill="none" stroke="#4a4a4a" stroke-width="1.6"/><text x="29" y="21" font-size="17" fill="#4a4a4a" font-family="Liberation Serif">1</text><text x="0" y="46" font-size="26" font-weight="700" fill="#4a4a4a" font-family="Liberation Sans">&#931;X</text><rect x="33" y="42" width="3" height="3" fill="#4a4a4a"/><rect x="38.5" y="42" width="3" height="3" fill="#4a4a4a"/><rect x="44" y="42" width="3" height="3" fill="#4a4a4a"/></svg>
<svg style="left:1133.00px;top:135.00px;" width="50.00" height="48.00" viewBox="0 0 50 48"><rect x="1" y="1" width="47" height="45.5" fill="none" stroke="#4a4a4a" stroke-width="1.3"/><path d="M17,1 V46.5 M33,1 V46.5 M1,10 H48 M1,19.2 H48 M1,28.4 H48 M1,37.5 H48" fill="none" stroke="#4a4a4a" stroke-width="1.3"/><rect x="1.5" y="10.5" width="15.5" height="8.7" fill="none" stroke="#c8102e" stroke-width="2.5"/><rect x="17" y="19.2" width="16" height="18.3" fill="none" stroke="#e8461c" stroke-width="2.5"/><path d="M17,28.4 H33" stroke="#e8461c" stroke-width="2.5"/><rect x="33" y="37.5" width="14.8" height="8.8" fill="none" stroke="#f05a1a" stroke-width="2.5"/></svg>
<svg style="left:1206.00px;top:141.00px;" width="24.00" height="14.00" viewBox="0 0 24 14"><rect x="0.7" y="0.9" width="22.6" height="11.8" fill="none" stroke="#404040" stroke-width="1.5"/><path d="M8.4,0.9 V12.7 M15.6,0.9 V12.7" fill="none" stroke="#404040" stroke-width="1.5"/><path d="M1.5,7 H22.5 M6,2.5 L1.5,7 L6,11.5 M18,2.5 L22.5,7 L18,11.5" fill="none" stroke="#e03a1e" stroke-width="1.3"/></svg>
<svg style="left:1208.00px;top:174.00px;" width="20.00" height="26.00" viewBox="0 0 20 26"><rect x="1.2" y="1.2" width="16.4" height="5.6" fill="none" stroke="#404040" stroke-width="1.5"/><rect x="1.2" y="19.2" width="16.4" height="5.6" fill="none" stroke="#404040" stroke-width="1.5"/><path d="M4.4,17 V8.7 M1.5,11.5 L4.4,8.7 L7.3,11.5 M13.6,8.7 V17 M10.7,14.2 L13.6,17 L16.5,14.2" fill="none" stroke="#e03a1e" stroke-width="1.3"/></svg>
<svg style="left:1206.00px;top:219.00px;" width="26.00" height="18.00" viewBox="0 0 26 18"><text x="5" y="15" font-size="17" font-style="italic" fill="#555" font-family="Liberation Sans">a</text><path d="M3,15.5 H7 M18,15.5 H24" stroke="#555" stroke-width="1.2"/><path d="M1,17 L8.5,1.5 M15.5,17 L23.5,1.5" stroke="#e8461c" stroke-width="1.3"/></svg>
<svg style="left:1288.00px;top:223.50px;" width="9.00" height="6.00" viewBox="0 0 9 6"><path d="M0.6,0.6 L4.5,4.5 L8.4,0.6" fill="none" stroke="#333" stroke-width="1.4"/></svg>
<svg style="left:1398.80px;top:136.00px;" width="24.00" height="24.00" viewBox="0 0 24 24"><defs><linearGradient id="g4" x1="0" y1="1" x2="1" y2="0"><stop offset="0" stop-color="#c8102e"/><stop offset="1" stop-color="#f05a1a"/></linearGradient></defs><text x="0" y="12.5" font-size="14.5" font-weight="700" fill="url(#g4)" font-family="Liberation Sans" textLength="24" lengthAdjust="spacingAndGlyphs">123</text><text x="0.5" y="23" font-size="12" fill="#555" font-family="Liberation Sans" textLength="23" lengthAdjust="spacingAndGlyphs">abc</text><path d="M1,22.5 L23.5,15" stroke="#e8461c" stroke-width="1"/></svg>
<svg style="left:1437.60px;top:136.00px;" width="24.00" height="24.00" viewBox="0 0 24 24"><text x="0" y="10" font-size="11.5" fill="#444" font-family="Liberation Sans" textLength="24" lengthAdjust="spacingAndGlyphs">1234</text><text x="5" y="21" font-size="11.5" fill="#444" font-family="Liberation Sans" textLength="19" lengthAdjust="spacingAndGlyphs">567</text><path d="M4,9.5 L3,14 M4,17 L3,23" stroke="#d9202e" stroke-width="2"/></svg>
<svg style="left:1477.00px;top:136.00px;" width="24.00" height="24.00" viewBox="0 0 24 24"><defs><linearGradient id="g5" x1="0" y1="1" x2="1" y2="0"><stop offset="0" stop-color="#c8102e"/><stop offset="1" stop-color="#f05a1a"/></linearGradient></defs><rect x="0" y="0" width="24" height="15" fill="url(#g5)"/><rect x="0" y="17.2" width="24" height="6.8" fill="url(#g5)"/><text x="0.5" y="12" font-size="11" font-weight="700" fill="#fff" font-family="Liberation Sans" textLength="23" lengthAdjust="spacingAndGlyphs">ABC</text></svg>
<svg style="left:1516.00px;top:136.00px;" width="24.00" height="24.00" viewBox="0 0 24 24"><rect x="0.8" y="0.8" width="7.5" height="4.4" fill="none" stroke="#404040" stroke-width="1.5"/><rect x="0.8" y="18.8" width="7.5" height="4.4" fill="none" stroke="#404040" stroke-width="1.5"/><rect x="15.7" y="9.8" width="7.5" height="4.4" fill="none" stroke="#404040" stroke-width="1.5"/><path d="M10.5,0.8 H19.5 V7.5 M17,5 L19.5,7.5 L22,5 M10.5,23.2 H19.5 V16.5 M17,19 L19.5,16.5 L22,19" fill="none" stroke="#e8461c" stroke-width="1.2"/></svg>
<svg style="left:1398.80px;top:175.00px;" width="24.00" height="24.00" viewBox="0 0 24 24"><text x="0.5" y="11" font-size="11.5" fill="#555" font-family="Liberation Sans" textLength="23" lengthAdjust="spacingAndGlyphs">123</text><path d="M1,10.5 L23.5,3.5" stroke="#e8461c" stroke-width="1"/><defs><linearGradient id="g6" x1="0" y1="1" x2="1" y2="0"><stop offset="0" stop-color="#c8102e"/><stop offset="1" stop-color="#f05a1a"/></linearGradient></defs><text x="0" y="23.5" font-size="14" font-weight="700" fill="url(#g6)" font-family="Liberation Sans" textLength="24" lengthAdjust="spacingAndGlyphs">abc</text></svg>
<svg style="left:1437.60px;top:175.00px;" width="24.00" height="24.00" viewBox="0 0 24 24"><text x="3" y="22.5" font-size="30" fill="#444" font-family="Liberation Sans" textLength="19" lengthAdjust="spacingAndGlyphs">K</text></svg>
<svg style="left:1477.00px;top:175.00px;" width="24.00" height="24.00" viewBox="0 0 24 24"><rect x="0.7" y="0.7" width="22.6" height="22.6" fill="none" stroke="#404040" stroke-width="1.5"/><text x="1.5" y="18.5" font-size="13" fill="#444" font-family="Liberation Sans" textLength="21" lengthAdjust="spacingAndGlyphs">123</text></svg>
<svg style="left:1516.00px;top:175.00px;" width="24.00" height="24.00" viewBox="0 0 24 24"><rect x="15.7" y="0.8" width="7.5" height="4.4" fill="none" stroke="#404040" stroke-width="1.5"/><rect x="0.8" y="9.8" width="7.5" height="4.4" fill="none" stroke="#404040" stroke-width="1.5"/><rect x="15.7" y="18.8" width="7.5" height="4.4" fill="none" stroke="#404040" stroke-width="1.5"/><path d="M3.5,8.5 V4 H13.5 M11,1.5 L13.5,4 L11,6.5 M3.5,15.5 V20 H13.5 M11,17.5 L13.5,20 L11,22.5" fill="none" stroke="#e8461c" stroke-width="1.2"/></svg>
<svg style="left:1398.80px;top:214.00px;" width="24.00" height="24.00" viewBox="0 0 24 24"><rect x="0.7" y="0.7" width="22.6" height="22.6" fill="none" stroke="#444" stroke-width="1.3"/><path d="M8.5,0.7 V23.3 M15.5,0.7 V23.3 M0.7,5.2 H23.3 M0.7,9.7 H23.3 M0.7,14.2 H23.3 M0.7,18.7 H23.3" fill="none" stroke="#444" stroke-width="1"/><rect x="9" y="1.5" width="6" height="3" fill="#e8461c"/><rect x="9" y="6" width="3" height="3" fill="#e8461c"/><rect x="9" y="15" width="6" height="3" fill="#e8461c"/><rect x="9" y="19.5" width="3" height="3.5" fill="#d9202e"/><path d="M3,21 L21,3" stroke="#e8461c" stroke-width="1.1"/></svg>
<svg style="left:1437.60px;top:214.00px;" width="24.00" height="24.00" viewBox="0 0 24 24"><text x="1" y="23.5" font-size="30" fill="#444" font-family="Liberation Sans" textLength="22" lengthAdjust="spacingAndGlyphs">M</text></svg>
<svg style="left:1477.00px;top:214.00px;" width="24.00" height="24.00" viewBox="0 0 24 24"><path d="M1,14 L9,10 L14.5,16 L10.5,23.5 Z" fill="#444"/><path d="M13,11.5 L22.5,1" stroke="#444" stroke-width="1.8"/></svg>
<svg style="left:1516.00px;top:214.00px;" width="24.00" height="24.00" viewBox="0 0 24 24"><path d="M0.5,12 H9 M14,4.5 L21.5,12 L14,19.5 M13,2.5 L16,5.5" fill="none" stroke="#444" stroke-width="1.6"/><path d="M3,20 L21,2" stroke="#e8461c" stroke-width="1"/></svg>
<svg style="left:1576.00px;top:136.00px;" width="50.00" height="44.00" viewBox="0 0 50 44"><g fill="none" stroke="#555" stroke-width="3.8"><ellipse cx="39" cy="12.5" rx="11.5" ry="6.8" transform="rotate(-52 39 12.5)"/><ellipse cx="15.5" cy="32" rx="13.5" ry="7.6" transform="rotate(-33 15.5 32)"/></g><path d="M27.5,17.5 L33,23.5" stroke="#fff" stroke-width="4.5"/><path d="M22,26 L28,32" stroke="#fff" stroke-width="3.5"/><path d="M29.5,19 L25.5,26" stroke="#555" stroke-width="3"/><path d="M9,10 L14,16 M18.5,4 L20,11.5 M5,19.5 L12.5,21" stroke="#555" stroke-width="1.8"/></svg>
<svg style="left:1641.00px;top:136.00px;" width="24.00" height="24.00" viewBox="0 0 24 24"><path d="M15.3,3.5 V0.8 H0.8 V18 H3.5" fill="none" stroke="#404040" stroke-width="1.5"/><rect x="9.7" y="4.9" width="14" height="18.4" fill="none" stroke="#404040" stroke-width="1.5"/><path d="M13.3,14 H21 M17.2,10 V18" stroke="#d9202e" stroke-width="1.4"/></svg>
<svg style="left:1641.00px;top:175.00px;" width="24.00" height="24.00" viewBox="0 0 24 24"><rect x="0.8" y="1" width="8" height="3.8" fill="none" stroke="#404040" stroke-width="1.5"/><rect x="0.8" y="8.4" width="8" height="3.8" fill="none" stroke="#404040" stroke-width="1.5"/><rect x="0.8" y="18.5" width="8" height="3.8" fill="none" stroke="#404040" stroke-width="1.5"/><rect x="16.3" y="1" width="7" height="13.5" fill="none" stroke="#404040" stroke-width="1.5"/><path d="M16.3,5.5 H23.3 M16.3,10 H23.3" fill="none" stroke="#404040" stroke-width="1.5"/><path d="M9.5,3.5 H15 M12.5,1 L15,3.5 L12.5,6 M9.5,11.5 H15 M12.5,9 L15,11.5 L12.5,14 M10,22 H18.5 V16.5 M16,19 L18.5,16.5 L21,19" fill="none" stroke="#e8461c" stroke-width="1.2"/></svg>
<svg style="left:1641.00px;top:217.00px;" width="24.00" height="16.00" viewBox="0 0 24 16"><path d="M0.8,8 L6.5,1 H23.3 V14.7 H6.5 Z" fill="none" stroke="#404040" stroke-width="1.5"/><path d="M8,6.8 H20 M8,9.7 H20" stroke="#d9202e" stroke-width="1.3"/></svg>
<svg style="left:1816.00px;top:138.00px;" width="22.00" height="20.00" viewBox="0 0 22 20"><path d="M3,1 H21.5 M3,5.5 H21.5 M3,10 H21.5 M3,14.5 H21.5 M3,19 H21.5" fill="none" stroke="#444" stroke-width="1.5"/><path d="M0,1 H1.2 M0,5.5 H1.2 M0,10 H1.2 M0,14.5 H1.2 M0,19 H1.2" fill="none" stroke="#444" stroke-width="1.5"/></svg>
<svg style="left:1816.00px;top:177.00px;" width="22.00" height="20.00" viewBox="0 0 22 20"><path d="M3,1 H21.5 M3,10 H21.5 M3,19 H21.5 M0,1 H1.2 M0,10 H1.2 M0,19 H1.2" fill="none" stroke="#444" stroke-width="1.5"/><path d="M3,5.5 H21.5 M3,14.5 H21.5 M0,5.5 H1.2 M0,14.5 H1.2" fill="none" stroke="#e02a20" stroke-width="1.5"/></svg>
<svg style="left:1815.00px;top:214.00px;" width="24.00" height="24.00" viewBox="0 0 24 24"><path d="M1,18.5 V0.8 H19 V4 M1,5.2 H9.5 M1,9.7 H9.5 M1,14.2 H9.5 M6,0.8 V18.5 M12.5,0.8 V5" fill="none" stroke="#444" stroke-width="1.1"/><rect x="10.5" y="6.2" width="13" height="17.2" fill="#fff" stroke="#d9202e" stroke-width="1.3"/><rect x="13" y="8.5" width="8" height="3" fill="#d9202e"/><g fill="#d9202e"><rect x="13" y="14" width="1.8" height="1.6"/><rect x="16.2" y="14" width="1.8" height="1.6"/><rect x="19.4" y="14" width="1.8" height="1.6"/><rect x="13" y="17.5" width="1.8" height="1.6"/><rect x="16.2" y="17.5" width="1.8" height="1.6"/><rect x="19.4" y="17.5" width="1.8" height="1.6"/></g></svg>
<svg style="left:1958.20px;top:136.00px;" width="24.00" height="24.00" viewBox="0 0 24 24"><circle cx="9" cy="9" r="8.2" fill="none" stroke="#444" stroke-width="1.2"/><path d="M9,6.5 V13" fill="none" stroke="#444" stroke-width="1.4"/><circle cx="9" cy="4.3" r="0.8" fill="#444"/><path d="M22,10 A7.5,7.5 0 1 0 22,18.5" fill="none" stroke="#ee5a1a" stroke-width="1.4"/><path d="M22.5,5.5 V10.5 H17.5" fill="none" stroke="#ee5a1a" stroke-width="1.3"/></svg>
<svg style="left:1997.00px;top:136.00px;" width="24.00" height="24.00" viewBox="0 0 24 24"><path d="M0.8,16 V4 H11 V1 H18.5 V5.5 M3.5,16 H0.8" fill="none" stroke="#404040" stroke-width="1.5"/><path d="M4.6,23.2 V8.9 H15 V7.5 H23.2 V23.2 Z M4.6,10.5 H23.2" fill="none" stroke="#404040" stroke-width="1.5"/></svg>
<svg style="left:1958.20px;top:175.20px;" width="24.00" height="24.00" viewBox="0 0 24 24"><rect x="2.6" y="0.8" width="18.8" height="22.4" fill="none" stroke="#444" stroke-width="1.5"/><path d="M5,4 H19 " stroke="#e8461c" stroke-width="1.3"/><path d="M5,20 H19" stroke="#c8102e" stroke-width="1.3"/></svg>
<svg style="left:1997.00px;top:175.20px;" width="24.00" height="24.00" viewBox="0 0 24 24"><rect x="0.8" y="0.8" width="22.4" height="22.4" fill="none" stroke="#444" stroke-width="1.5"/><rect x="3.6" y="3" width="2.6" height="2.6" fill="#e8461c"/><rect x="3.6" y="7.5" width="2.6" height="13.5" fill="#d9202e"/><path d="M9.5,5 H20.5 M9.5,9.5 H20.5 M9.5,14 H20.5 M9.5,18.5 H20.5" fill="none" stroke="#444" stroke-width="1.2"/></svg>
<svg style="left:1958.20px;top:214.00px;" width="24.00" height="24.00" viewBox="0 0 24 24"><path d="M14.5,4 V1 H0.8 V18.5 H6" fill="none" stroke="#444" stroke-width="1.3"/><path d="M9.5,8.4 V4.5 H23.2 V23.2 H9.5 V19" fill="none" stroke="#444" stroke-width="1.5"/><path d="M7,11.4 H16.5 M7,15.6 H16.5" stroke="#d9202e" stroke-width="1.2"/></svg>
<svg style="left:1997.00px;top:214.00px;" width="24.00" height="24.00" viewBox="0 0 24 24"><defs><linearGradient id="gph" x1="0" y1="0" x2="1" y2="1"><stop offset="0" stop-color="#d9c8b8"/><stop offset="1" stop-color="#f2b070"/></linearGradient></defs><rect x="0" y="0" width="24" height="24" fill="url(#gph)"/><circle cx="7" cy="9" r="3.5" fill="none" stroke="#333" stroke-width="1.4"/><ellipse cx="15" cy="21.5" rx="5" ry="1.6" fill="#e02020"/><path d="M0,24 L24,0" stroke="#ff6a00" stroke-width="3.5"/></svg>
<svg style="left:2065.00px;top:135.30px;" width="48.00" height="47.00" viewBox="0 0 48 47"><g fill="none" stroke="#4a4a4a" stroke-width="1.4"><path d="M1,46.3 V0.8 H47 V7 M47,12 V16 M47,21 V25 M47,30 V35 M47,40 V46.3 H40 M34,46.3 H25 M19,46.3 H14 M8,46.3 H1"/><path d="M1,9.7 H40 M1,18.6 H28 M36,18.6 H47 M1,27.5 H25 M31,27.5 H44 M1,36.3 H18 M25,36.3 H35 M40,36.3 H47 M16,0.8 V36.3 M32,0.8 V23 M32,27.5 V32 M32,36.3 V40 M16,41 V46"/></g></svg>
<svg style="left:2163.00px;top:135.30px;" width="48.00" height="47.00" viewBox="0 0 48 47"><g fill="none" stroke="#4a4a4a" stroke-width="1.4"><rect x="16" y="0.8" width="31" height="45.5"/><path d="M31.5,0.8 V46.3 M16,10 H47 M16,19 H47 M16,28 H47 M16,37 H47 M7,9.5 V1 H13"/><rect x="0.8" y="12.7" width="12" height="11.5"/><rect x="0.8" y="27.7" width="12" height="11.5"/></g><path d="M3.3,18.5 H10.3 M6.8,15 V22 M3.3,33.5 H10.3 M6.8,30 V37" stroke="#d9202e" stroke-width="1.5"/></svg>
<svg style="left:2252.00px;top:136.00px;" width="24.00" height="24.00" viewBox="0 0 24 24"><text x="0" y="21" font-size="23" fill="#444" font-family="Liberation Serif" font-style="italic">F</text><text x="6" y="22.5" font-size="10" font-weight="700" fill="#444" font-family="Liberation Serif">n</text><circle cx="19" cy="5" r="3.8" fill="none" stroke="#444" stroke-width="1.4"/><path d="M14,11.5 H23.5 M18.8,11.5 V23" stroke="#444" stroke-width="1.6"/></svg>
<svg style="left:2252.00px;top:175.00px;" width="24.00" height="24.00" viewBox="0 0 24 24"><rect x="0.8" y="0.8" width="22.4" height="21.5" fill="none" stroke="#444" stroke-width="1.3"/><rect x="0" y="19.5" width="24" height="3.5" fill="#444"/><rect x="8" y="20" width="8" height="2.5" fill="#e02a20"/></svg>
<svg style="left:2252.00px;top:214.00px;" width="24.00" height="24.00" viewBox="0 0 24 24"><path d="M12,3 V0.8 H23.2 V14.5 H21" fill="none" stroke="#444" stroke-width="1.2"/><path d="M7,9 V5.5 H18.7 V19.3 H15.5" fill="none" stroke="#444" stroke-width="1.2"/><defs><linearGradient id="g7" x1="0" y1="1" x2="1" y2="0"><stop offset="0" stop-color="#c8102e"/><stop offset="1" stop-color="#f05a1a"/></linearGradient></defs><rect x="0.9" y="9.8" width="12.6" height="13.3" fill="none" stroke="url(#g7)" stroke-width="1.6"/></svg>
<svg style="left:2445.00px;top:134.00px;" width="50.00" height="48.00" viewBox="0 0 50 48"><defs><linearGradient id="g8" x1="0" y1="1" x2="1" y2="0"><stop offset="0" stop-color="#c8102e"/><stop offset="1" stop-color="#f05a1a"/></linearGradient></defs><path d="M2,12 Q25,19 48,12 V35 Q25,28 2,35 Z" fill="none" stroke="#4a4a4a" stroke-width="2.2"/><text x="9" y="31.5" font-size="22" fill="url(#g8)" font-family="Liberation Sans" textLength="33" lengthAdjust="spacingAndGlyphs">MB</text><path d="M12,1 L24.5,13 L37,1 M12,47 L24,35 L36,47" fill="none" stroke="#ee4a1a" stroke-width="2"/></svg>
<svg style="left:2519.00px;top:134.00px;" width="48.00" height="48.00" viewBox="0 0 48 48"><path d="M15,12.7 H1.1 V47 H47 V12.7 H33" fill="none" stroke="#444" stroke-width="2.2"/><path d="M23.6,17.5 V3 M17.8,8.5 L23.6,2.7 L29.4,8.5" fill="none" stroke="#444" stroke-width="2.4"/></svg>
<svg style="left:2592.00px;top:134.00px;" width="48.00" height="48.00" viewBox="0 0 48 48"><path d="M15,12.7 H1.1 V47 H47 V12.7 H33" fill="none" stroke="#444" stroke-width="2.2"/><path d="M23.6,17.5 V3 M17.8,8.5 L23.6,2.7 L29.4,8.5" fill="none" stroke="#444" stroke-width="2.4"/><defs><linearGradient id="g9" x1="0" y1="1" x2="1" y2="0"><stop offset="0" stop-color="#c8102e"/><stop offset="1" stop-color="#f05a1a"/></linearGradient></defs><text x="3" y="42.2" font-size="24.5" fill="url(#g9)" font-family="Liberation Sans" textLength="42" lengthAdjust="spacingAndGlyphs">XLS</text></svg>
<svg style="left:2657.00px;top:134.00px;" width="48.00" height="48.00" viewBox="0 0 48 48"><path d="M14.5,35 H1.1 V1.1 H47 V35 H33" fill="none" stroke="#444" stroke-width="2.2"/><path d="M23.6,30.5 V45 M17.8,39.5 L23.6,45.3 L29.4,39.5" fill="none" stroke="#444" stroke-width="2.4"/><defs><linearGradient id="g10" x1="0" y1="1" x2="1" y2="0"><stop offset="0" stop-color="#c8102e"/><stop offset="1" stop-color="#f05a1a"/></linearGradient></defs><text x="3.8" y="22.5" font-size="25" fill="url(#g10)" font-family="Liberation Sans" textLength="40.7" lengthAdjust="spacingAndGlyphs">XLS</text></svg>
<svg style="left:2754.00px;top:141.00px;" width="22.00" height="26.00" viewBox="0 0 22 26"><defs><linearGradient id="gin" x1="0" y1="0" x2="0" y2="1"><stop offset="0" stop-color="#f0501a"/><stop offset="1" stop-color="#c8102e"/></linearGradient></defs><g fill="url(#gin)" stroke="none"><path d="M6,1.5 Q8,1 14,1.2 V4 H6 Z"/><path d="M9.5,4 H12.5 L12.2,23.5 L10.8,25 L9.8,23.5 Z"/></g><path d="M1.3,6 L8.7,12.3" stroke="#e8401e" stroke-width="1.2" stroke-dasharray="1.5 0.8"/><path d="M8,14 L2,20.5" stroke="#d9202e" stroke-width="3.2" stroke-linecap="round"/><path d="M13.5,15 L18.8,20" stroke="#c8102e" stroke-width="3" stroke-linecap="round"/><path d="M14.5,13 L16.5,8 Q18.5,6 20.5,7 L18,8.5 L18,10.5 L20.5,10 Q19.5,13 16.5,13.5 Z" fill="#d9202e"/></svg>
<svg style="left:2611.00px;top:220.00px;" width="9.00" height="6.00" viewBox="0 0 9 6"><path d="M0.6,0.6 L4.5,4.5 L8.4,0.6" fill="none" stroke="#333" stroke-width="1.4"/></svg>
<svg style="left:2676.00px;top:220.00px;" width="9.00" height="6.00" viewBox="0 0 9 6"><path d="M0.6,0.6 L4.5,4.5 L8.4,0.6" fill="none" stroke="#333" stroke-width="1.4"/></svg>
<svg style="left:2759.50px;top:215.00px;" width="9.00" height="6.00" viewBox="0 0 9 6"><path d="M0.6,0.6 L4.5,4.5 L8.4,0.6" fill="none" stroke="#333" stroke-width="1.4"/></svg>
<svg style="left:2863.00px;top:248.00px;" width="17.00" height="10.00" viewBox="0 0 17 10"><path d="M0.8,0.8 L8.5,8.5 L16.2,0.8" fill="none" stroke="#333" stroke-width="1.5"/></svg>
<svg style="left:464.00px;top:220.00px;" width="9.00" height="6.00" viewBox="0 0 9 6"><path d="M0.6,0.6 L4.5,4.5 L8.4,0.6" fill="none" stroke="#333" stroke-width="1.4"/></svg>
<svg style="left:595.50px;top:220.00px;" width="9.00" height="6.00" viewBox="0 0 9 6"><path d="M0.6,0.6 L4.5,4.5 L8.4,0.6" fill="none" stroke="#333" stroke-width="1.4"/></svg>
<svg style="left:673.00px;top:220.00px;" width="9.00" height="6.00" viewBox="0 0 9 6"><path d="M0.6,0.6 L4.5,4.5 L8.4,0.6" fill="none" stroke="#333" stroke-width="1.4"/></svg>
<svg style="left:924.00px;top:220.00px;" width="9.00" height="6.00" viewBox="0 0 9 6"><path d="M0.6,0.6 L4.5,4.5 L8.4,0.6" fill="none" stroke="#333" stroke-width="1.4"/></svg>
<svg style="left:991.00px;top:220.00px;" width="9.00" height="6.00" viewBox="0 0 9 6"><path d="M0.6,0.6 L4.5,4.5 L8.4,0.6" fill="none" stroke="#333" stroke-width="1.4"/></svg>
<svg style="left:1080.00px;top:220.00px;" width="9.00" height="6.00" viewBox="0 0 9 6"><path d="M0.6,0.6 L4.5,4.5 L8.4,0.6" fill="none" stroke="#333" stroke-width="1.4"/></svg>
<svg style="left:1176.00px;top:220.00px;" width="9.00" height="6.00" viewBox="0 0 9 6"><path d="M0.6,0.6 L4.5,4.5 L8.4,0.6" fill="none" stroke="#333" stroke-width="1.4"/></svg>
<svg style="left:2586.00px;top:90.00px;" width="18.00" height="17.00" viewBox="0 0 18 17"><path d="M0.8,0.8 H17.2 V11.5 H7 L3,15.5 V11.5 H0.8 Z" fill="none" stroke="#333" stroke-width="1.4"/></svg>
<svg style="left:2746.00px;top:89.00px;" width="19.00" height="18.00" viewBox="0 0 19 18"><path d="M6,5 H1 V17 H15 V13" fill="none" stroke="#fff" stroke-width="1.5"/><path d="M5,13 C5,8 8,6 13,6 V2 L18.5,7.5 L13,13 V9.5 C9,9.5 6.5,10.5 5,13 Z" fill="none" stroke="#fff" stroke-width="1.4"/></svg>
<svg style="left:2857.00px;top:87.00px;" width="25.00" height="25.00" viewBox="0 0 25 25"><circle cx="12.5" cy="12.5" r="11.3" fill="none" stroke="#333" stroke-width="1.5"/><circle cx="8.5" cy="10" r="1.3" fill="#333"/><circle cx="16.5" cy="10" r="1.3" fill="#333"/><path d="M7.5,15.5 Q12.5,20 17.5,15.5" fill="none" stroke="#333" stroke-width="1.5"/></svg>
<div style="left:14.75px;top:285.00px;width:150.65px;height:34.50px;background:#fff;border:1px solid #dadada;box-sizing:border-box;border-radius:7px;"></div>
<div style="left:196.40px;top:285.00px;width:108.70px;height:34.50px;background:#fff;border:1px solid #dadada;box-sizing:border-box;border-radius:7px;"></div>
<div style="left:312.10px;top:285.00px;width:2579.90px;height:34.50px;background:#fff;border:1px solid #dadada;box-sizing:border-box;border-radius:7px;"></div>
<div class="t" style="left:22.00px;top:293.92px;font-size:19px;color:#000;transform:scaleX(0.9467);transform-origin:left top;">B6</div>
<div class="t" style="left:330.00px;top:293.92px;font-size:19px;color:#000;transform:scaleX(1.0570);transform-origin:left top;">[k]</div>
<svg style="left:143.00px;top:298.70px;" width="15.00" height="9.00" viewBox="0 0 15 9"><path d="M0.8,0.8 L7.5,7.8 L14.2,0.8" fill="none" stroke="#333" stroke-width="1.5"/></svg>
<div style="left:179.60px;top:296.50px;width:3.00px;height:3.00px;background:#7a7a7a;border-radius:1px;"></div>
<div style="left:179.60px;top:302.00px;width:3.00px;height:3.00px;background:#7a7a7a;border-radius:1px;"></div>
<div style="left:179.60px;top:307.50px;width:3.00px;height:3.00px;background:#7a7a7a;border-radius:1px;"></div>
<svg style="left:206.00px;top:293.50px;" width="18.00" height="18.00" viewBox="0 0 18 18"><path d="M0.8,0.8 L17.2,17.2 M17.2,0.8 L0.8,17.2" fill="none" stroke="#a8a8a8" stroke-width="1.4"/></svg>
<svg style="left:239.00px;top:293.50px;" width="24.00" height="18.00" viewBox="0 0 24 18"><path d="M0.8,10 L8,17 L23.2,0.8" fill="none" stroke="#a8a8a8" stroke-width="1.4"/></svg>
<svg style="left:275.00px;top:289.00px;" width="24.00" height="26.00" viewBox="0 0 24 26"><g fill="none" stroke="#222" stroke-linecap="round"><path d="M14,3.5 C12.5,1.5 10.5,2 9.8,4.5 L5.5,21.5 C4.8,24 2.8,24.5 1.5,23" stroke-width="1.8"/><path d="M5.5,10 H10.5" stroke-width="1.4"/><path d="M10,11 C12,10 12.8,11 13.5,13.5 L15.5,19 C16.5,21 17.8,21 19.5,19" stroke-width="1.8"/><path d="M20,11 C18.5,10 17.2,11 15.5,13.5 L13,17.5 C11.8,19.5 10.8,20.5 9,19" stroke-width="1.7"/></g></svg>
<svg style="left:2871.80px;top:297.20px;" width="15.00" height="9.00" viewBox="0 0 15 9"><path d="M0.8,0.8 L7.5,7.8 L14.2,0.8" fill="none" stroke="#333" stroke-width="1.5"/></svg>
<div style="left:44.00px;top:357.00px;width:2830.00px;height:1185.00px;background:#fff;"></div>
<div style="left:150.00px;top:330.00px;width:132.00px;height:27.00px;background:#d3d3d3;"></div>
<div style="left:150.00px;top:355.30px;width:132.00px;height:2.60px;background:#107c41;"></div>
<div style="left:44.00px;top:330.00px;width:1.00px;height:1212.00px;background:#9e9e9e;"></div>
<div style="left:150.00px;top:330.00px;width:1.00px;height:27.00px;background:#c8c8c8;"></div>
<div style="left:150.00px;top:358.00px;width:1.00px;height:1184.00px;background:#e1e1e1;"></div>
<div style="left:282.00px;top:330.00px;width:1.00px;height:27.00px;background:#c8c8c8;"></div>
<div style="left:282.00px;top:358.00px;width:1.00px;height:1184.00px;background:#e1e1e1;"></div>
<div style="left:410.00px;top:330.00px;width:1.00px;height:27.00px;background:#c8c8c8;"></div>
<div style="left:410.00px;top:358.00px;width:1.00px;height:1184.00px;background:#e1e1e1;"></div>
<div style="left:538.00px;top:330.00px;width:1.00px;height:27.00px;background:#c8c8c8;"></div>
<div style="left:538.00px;top:358.00px;width:1.00px;height:1184.00px;background:#e1e1e1;"></div>
<div style="left:666.00px;top:330.00px;width:1.00px;height:27.00px;background:#c8c8c8;"></div>
<div style="left:666.00px;top:358.00px;width:1.00px;height:1184.00px;background:#e1e1e1;"></div>
<div style="left:794.00px;top:330.00px;width:1.00px;height:27.00px;background:#c8c8c8;"></div>
<div style="left:794.00px;top:358.00px;width:1.00px;height:1184.00px;background:#e1e1e1;"></div>
<div style="left:922.00px;top:330.00px;width:1.00px;height:27.00px;background:#c8c8c8;"></div>
<div style="left:922.00px;top:358.00px;width:1.00px;height:1184.00px;background:#e1e1e1;"></div>
<div style="left:1050.00px;top:330.00px;width:1.00px;height:27.00px;background:#c8c8c8;"></div>
<div style="left:1050.00px;top:358.00px;width:1.00px;height:1184.00px;background:#e1e1e1;"></div>
<div style="left:1178.00px;top:330.00px;width:1.00px;height:27.00px;background:#c8c8c8;"></div>
<div style="left:1178.00px;top:358.00px;width:1.00px;height:1184.00px;background:#e1e1e1;"></div>
<div style="left:1284.00px;top:330.00px;width:1.00px;height:27.00px;background:#c8c8c8;"></div>
<div style="left:1284.00px;top:358.00px;width:1.00px;height:1184.00px;background:#e1e1e1;"></div>
<div style="left:1390.00px;top:330.00px;width:1.00px;height:27.00px;background:#c8c8c8;"></div>
<div style="left:1390.00px;top:358.00px;width:1.00px;height:1184.00px;background:#e1e1e1;"></div>
<div style="left:1496.00px;top:330.00px;width:1.00px;height:27.00px;background:#c8c8c8;"></div>
<div style="left:1496.00px;top:358.00px;width:1.00px;height:1184.00px;background:#e1e1e1;"></div>
<div style="left:1602.00px;top:330.00px;width:1.00px;height:27.00px;background:#c8c8c8;"></div>
<div style="left:1602.00px;top:358.00px;width:1.00px;height:1184.00px;background:#e1e1e1;"></div>
<div style="left:1708.00px;top:330.00px;width:1.00px;height:27.00px;background:#c8c8c8;"></div>
<div style="left:1708.00px;top:358.00px;width:1.00px;height:1184.00px;background:#e1e1e1;"></div>
<div style="left:1814.00px;top:330.00px;width:1.00px;height:27.00px;background:#c8c8c8;"></div>
<div style="left:1814.00px;top:358.00px;width:1.00px;height:1184.00px;background:#e1e1e1;"></div>
<div style="left:1920.00px;top:330.00px;width:1.00px;height:27.00px;background:#c8c8c8;"></div>
<div style="left:1920.00px;top:358.00px;width:1.00px;height:1184.00px;background:#e1e1e1;"></div>
<div style="left:2026.00px;top:330.00px;width:1.00px;height:27.00px;background:#c8c8c8;"></div>
<div style="left:2026.00px;top:358.00px;width:1.00px;height:1184.00px;background:#e1e1e1;"></div>
<div style="left:2132.00px;top:330.00px;width:1.00px;height:27.00px;background:#c8c8c8;"></div>
<div style="left:2132.00px;top:358.00px;width:1.00px;height:1184.00px;background:#e1e1e1;"></div>
<div style="left:2238.00px;top:330.00px;width:1.00px;height:27.00px;background:#c8c8c8;"></div>
<div style="left:2238.00px;top:358.00px;width:1.00px;height:1184.00px;background:#e1e1e1;"></div>
<div style="left:2344.00px;top:330.00px;width:1.00px;height:27.00px;background:#c8c8c8;"></div>
<div style="left:2344.00px;top:358.00px;width:1.00px;height:1184.00px;background:#e1e1e1;"></div>
<div style="left:2450.00px;top:330.00px;width:1.00px;height:27.00px;background:#c8c8c8;"></div>
<div style="left:2450.00px;top:358.00px;width:1.00px;height:1184.00px;background:#e1e1e1;"></div>
<div style="left:2556.00px;top:330.00px;width:1.00px;height:27.00px;background:#c8c8c8;"></div>
<div style="left:2556.00px;top:358.00px;width:1.00px;height:1184.00px;background:#e1e1e1;"></div>
<div style="left:2662.00px;top:330.00px;width:1.00px;height:27.00px;background:#c8c8c8;"></div>
<div style="left:2662.00px;top:358.00px;width:1.00px;height:1184.00px;background:#e1e1e1;"></div>
<div style="left:2768.00px;top:330.00px;width:1.00px;height:27.00px;background:#c8c8c8;"></div>
<div style="left:2768.00px;top:358.00px;width:1.00px;height:1184.00px;background:#e1e1e1;"></div>
<div style="left:2874.00px;top:358.00px;width:1.00px;height:1184.00px;background:#e1e1e1;"></div>
<div style="left:2.00px;top:357.00px;width:2872.00px;height:1.00px;background:#9e9e9e;"></div>
<div style="left:2.00px;top:385.00px;width:42.00px;height:1.00px;background:#c8c8c8;"></div>
<div style="left:45.00px;top:385.00px;width:2829.00px;height:1.00px;background:#e1e1e1;"></div>
<div style="left:2.00px;top:413.00px;width:42.00px;height:1.00px;background:#c8c8c8;"></div>
<div style="left:45.00px;top:413.00px;width:2829.00px;height:1.00px;background:#e1e1e1;"></div>
<div style="left:2.00px;top:441.00px;width:42.00px;height:1.00px;background:#c8c8c8;"></div>
<div style="left:45.00px;top:441.00px;width:2829.00px;height:1.00px;background:#e1e1e1;"></div>
<div style="left:2.00px;top:480.00px;width:42.00px;height:1.00px;background:#c8c8c8;"></div>
<div style="left:45.00px;top:480.00px;width:2829.00px;height:1.00px;background:#e1e1e1;"></div>
<div style="left:2.00px;top:509.00px;width:42.00px;height:1.00px;background:#c8c8c8;"></div>
<div style="left:45.00px;top:509.00px;width:2829.00px;height:1.00px;background:#e1e1e1;"></div>
<div style="left:2.00px;top:537.00px;width:42.00px;height:1.00px;background:#c8c8c8;"></div>
<div style="left:45.00px;top:537.00px;width:2829.00px;height:1.00px;background:#e1e1e1;"></div>
<div style="left:2.00px;top:565.00px;width:42.00px;height:1.00px;background:#c8c8c8;"></div>
<div style="left:45.00px;top:565.00px;width:2829.00px;height:1.00px;background:#e1e1e1;"></div>
<div style="left:2.00px;top:593.00px;width:42.00px;height:1.00px;background:#c8c8c8;"></div>
<div style="left:45.00px;top:593.00px;width:2829.00px;height:1.00px;background:#e1e1e1;"></div>
<div style="left:2.00px;top:621.00px;width:42.00px;height:1.00px;background:#c8c8c8;"></div>
<div style="left:45.00px;top:621.00px;width:2829.00px;height:1.00px;background:#e1e1e1;"></div>
<div style="left:2.00px;top:649.00px;width:42.00px;height:1.00px;background:#c8c8c8;"></div>
<div style="left:45.00px;top:649.00px;width:2829.00px;height:1.00px;background:#e1e1e1;"></div>
<div style="left:2.00px;top:677.00px;width:42.00px;height:1.00px;background:#c8c8c8;"></div>
<div style="left:45.00px;top:677.00px;width:2829.00px;height:1.00px;background:#e1e1e1;"></div>
<div style="left:2.00px;top:705.00px;width:42.00px;height:1.00px;background:#c8c8c8;"></div>
<div style="left:45.00px;top:705.00px;width:2829.00px;height:1.00px;background:#e1e1e1;"></div>
<div style="left:2.00px;top:733.00px;width:42.00px;height:1.00px;background:#c8c8c8;"></div>
<div style="left:45.00px;top:733.00px;width:2829.00px;height:1.00px;background:#e1e1e1;"></div>
<div style="left:2.00px;top:761.00px;width:42.00px;height:1.00px;background:#c8c8c8;"></div>
<div style="left:45.00px;top:761.00px;width:2829.00px;height:1.00px;background:#e1e1e1;"></div>
<div style="left:2.00px;top:789.00px;width:42.00px;height:1.00px;background:#c8c8c8;"></div>
<div style="left:45.00px;top:789.00px;width:2829.00px;height:1.00px;background:#e1e1e1;"></div>
<div style="left:2.00px;top:817.00px;width:42.00px;height:1.00px;background:#c8c8c8;"></div>
<div style="left:45.00px;top:817.00px;width:2829.00px;height:1.00px;background:#e1e1e1;"></div>
<div style="left:2.00px;top:845.00px;width:42.00px;height:1.00px;background:#c8c8c8;"></div>
<div style="left:45.00px;top:845.00px;width:2829.00px;height:1.00px;background:#e1e1e1;"></div>
<div style="left:2.00px;top:873.00px;width:42.00px;height:1.00px;background:#c8c8c8;"></div>
<div style="left:45.00px;top:873.00px;width:2829.00px;height:1.00px;background:#e1e1e1;"></div>
<div style="left:2.00px;top:901.00px;width:42.00px;height:1.00px;background:#c8c8c8;"></div>
<div style="left:45.00px;top:901.00px;width:2829.00px;height:1.00px;background:#e1e1e1;"></div>
<div style="left:2.00px;top:929.00px;width:42.00px;height:1.00px;background:#c8c8c8;"></div>
<div style="left:45.00px;top:929.00px;width:2829.00px;height:1.00px;background:#e1e1e1;"></div>
<div style="left:2.00px;top:957.00px;width:42.00px;height:1.00px;background:#c8c8c8;"></div>
<div style="left:45.00px;top:957.00px;width:2829.00px;height:1.00px;background:#e1e1e1;"></div>
<div style="left:2.00px;top:985.00px;width:42.00px;height:1.00px;background:#c8c8c8;"></div>
<div style="left:45.00px;top:985.00px;width:2829.00px;height:1.00px;background:#e1e1e1;"></div>
<div style="left:2.00px;top:1013.00px;width:42.00px;height:1.00px;background:#c8c8c8;"></div>
<div style="left:45.00px;top:1013.00px;width:2829.00px;height:1.00px;background:#e1e1e1;"></div>
<div style="left:2.00px;top:1041.00px;width:42.00px;height:1.00px;background:#c8c8c8;"></div>
<div style="left:45.00px;top:1041.00px;width:2829.00px;height:1.00px;background:#e1e1e1;"></div>
<div style="left:2.00px;top:1069.00px;width:42.00px;height:1.00px;background:#c8c8c8;"></div>
<div style="left:45.00px;top:1069.00px;width:2829.00px;height:1.00px;background:#e1e1e1;"></div>
<div style="left:2.00px;top:1097.00px;width:42.00px;height:1.00px;background:#c8c8c8;"></div>
<div style="left:45.00px;top:1097.00px;width:2829.00px;height:1.00px;background:#e1e1e1;"></div>
<div style="left:2.00px;top:1125.00px;width:42.00px;height:1.00px;background:#c8c8c8;"></div>
<div style="left:45.00px;top:1125.00px;width:2829.00px;height:1.00px;background:#e1e1e1;"></div>
<div style="left:2.00px;top:1153.00px;width:42.00px;height:1.00px;background:#c8c8c8;"></div>
<div style="left:45.00px;top:1153.00px;width:2829.00px;height:1.00px;background:#e1e1e1;"></div>
<div style="left:2.00px;top:1181.00px;width:42.00px;height:1.00px;background:#c8c8c8;"></div>
<div style="left:45.00px;top:1181.00px;width:2829.00px;height:1.00px;background:#e1e1e1;"></div>
<div style="left:2.00px;top:1209.00px;width:42.00px;height:1.00px;background:#c8c8c8;"></div>
<div style="left:45.00px;top:1209.00px;width:2829.00px;height:1.00px;background:#e1e1e1;"></div>
<div style="left:2.00px;top:1237.00px;width:42.00px;height:1.00px;background:#c8c8c8;"></div>
<div style="left:45.00px;top:1237.00px;width:2829.00px;height:1.00px;background:#e1e1e1;"></div>
<div style="left:2.00px;top:1265.00px;width:42.00px;height:1.00px;background:#c8c8c8;"></div>
<div style="left:45.00px;top:1265.00px;width:2829.00px;height:1.00px;background:#e1e1e1;"></div>
<div style="left:2.00px;top:1293.00px;width:42.00px;height:1.00px;background:#c8c8c8;"></div>
<div style="left:45.00px;top:1293.00px;width:2829.00px;height:1.00px;background:#e1e1e1;"></div>
<div style="left:2.00px;top:1321.00px;width:42.00px;height:1.00px;background:#c8c8c8;"></div>
<div style="left:45.00px;top:1321.00px;width:2829.00px;height:1.00px;background:#e1e1e1;"></div>
<div style="left:2.00px;top:1349.00px;width:42.00px;height:1.00px;background:#c8c8c8;"></div>
<div style="left:45.00px;top:1349.00px;width:2829.00px;height:1.00px;background:#e1e1e1;"></div>
<div style="left:2.00px;top:1377.00px;width:42.00px;height:1.00px;background:#c8c8c8;"></div>
<div style="left:45.00px;top:1377.00px;width:2829.00px;height:1.00px;background:#e1e1e1;"></div>
<div style="left:2.00px;top:1405.00px;width:42.00px;height:1.00px;background:#c8c8c8;"></div>
<div style="left:45.00px;top:1405.00px;width:2829.00px;height:1.00px;background:#e1e1e1;"></div>
<div style="left:2.00px;top:1433.00px;width:42.00px;height:1.00px;background:#c8c8c8;"></div>
<div style="left:45.00px;top:1433.00px;width:2829.00px;height:1.00px;background:#e1e1e1;"></div>
<div style="left:2.00px;top:1461.00px;width:42.00px;height:1.00px;background:#c8c8c8;"></div>
<div style="left:45.00px;top:1461.00px;width:2829.00px;height:1.00px;background:#e1e1e1;"></div>
<div style="left:2.00px;top:1489.00px;width:42.00px;height:1.00px;background:#c8c8c8;"></div>
<div style="left:45.00px;top:1489.00px;width:2829.00px;height:1.00px;background:#e1e1e1;"></div>
<div style="left:2.00px;top:1517.00px;width:42.00px;height:1.00px;background:#c8c8c8;"></div>
<div style="left:45.00px;top:1517.00px;width:2829.00px;height:1.00px;background:#e1e1e1;"></div>
<div style="left:2.00px;top:1545.00px;width:42.00px;height:1.00px;background:#c8c8c8;"></div>
<div style="left:45.00px;top:1545.00px;width:2829.00px;height:1.00px;background:#e1e1e1;"></div>
<div class="t" style="left:89.66px;top:333.38px;font-size:22px;color:#000;">A</div>
<div class="t" style="left:208.66px;top:333.38px;font-size:22px;color:#107c41;">B</div>
<div class="t" style="left:338.06px;top:333.38px;font-size:22px;color:#000;">C</div>
<div class="t" style="left:466.06px;top:333.38px;font-size:22px;color:#000;">D</div>
<div class="t" style="left:594.66px;top:333.38px;font-size:22px;color:#000;">E</div>
<div class="t" style="left:723.28px;top:333.38px;font-size:22px;color:#000;">F</div>
<div class="t" style="left:849.44px;top:333.38px;font-size:22px;color:#000;">G</div>
<div class="t" style="left:978.06px;top:333.38px;font-size:22px;color:#000;">H</div>
<div class="t" style="left:1110.94px;top:333.38px;font-size:22px;color:#000;">I</div>
<div class="t" style="left:1225.50px;top:333.38px;font-size:22px;color:#000;">J</div>
<div class="t" style="left:1329.66px;top:333.38px;font-size:22px;color:#000;">K</div>
<div class="t" style="left:1436.88px;top:333.38px;font-size:22px;color:#000;">L</div>
<div class="t" style="left:1539.84px;top:333.38px;font-size:22px;color:#000;">M</div>
<div class="t" style="left:1647.06px;top:333.38px;font-size:22px;color:#000;">N</div>
<div class="t" style="left:1752.44px;top:333.38px;font-size:22px;color:#000;">O</div>
<div class="t" style="left:1859.66px;top:333.38px;font-size:22px;color:#000;">P</div>
<div class="t" style="left:1964.44px;top:333.38px;font-size:22px;color:#000;">Q</div>
<div class="t" style="left:2071.06px;top:333.38px;font-size:22px;color:#000;">R</div>
<div class="t" style="left:2177.66px;top:333.38px;font-size:22px;color:#000;">S</div>
<div class="t" style="left:2284.28px;top:333.38px;font-size:22px;color:#000;">T</div>
<div class="t" style="left:2389.06px;top:333.38px;font-size:22px;color:#000;">U</div>
<div class="t" style="left:2495.66px;top:333.38px;font-size:22px;color:#000;">V</div>
<div class="t" style="left:2598.62px;top:333.38px;font-size:22px;color:#000;">W</div>
<div class="t" style="left:2707.66px;top:333.38px;font-size:22px;color:#000;">X</div>
<div class="t" style="left:2813.66px;top:333.38px;font-size:22px;color:#000;">Y</div>
<div style="left:2.00px;top:509.50px;width:42.00px;height:28.00px;background:#d3d3d3;"></div>
<div style="left:42.60px;top:509.50px;width:2.20px;height:28.00px;background:#107c41;"></div>
<div class="t" style="left:17.38px;top:360.78px;font-size:22px;color:#000;">1</div>
<div class="t" style="left:17.38px;top:388.78px;font-size:22px;color:#000;">2</div>
<div class="t" style="left:17.38px;top:416.78px;font-size:22px;color:#000;">3</div>
<div class="t" style="left:17.38px;top:453.38px;font-size:22px;color:#000;">4</div>
<div class="t" style="left:17.38px;top:484.78px;font-size:22px;color:#000;">5</div>
<div class="t" style="left:17.38px;top:512.78px;font-size:22px;color:#107c41;">6</div>
<div class="t" style="left:17.38px;top:540.78px;font-size:22px;color:#000;">7</div>
<div class="t" style="left:17.38px;top:568.78px;font-size:22px;color:#000;">8</div>
<div class="t" style="left:17.38px;top:596.78px;font-size:22px;color:#000;">9</div>
<div class="t" style="left:11.27px;top:624.78px;font-size:22px;color:#000;">10</div>
<div class="t" style="left:12.08px;top:652.78px;font-size:22px;color:#000;">11</div>
<div class="t" style="left:11.27px;top:680.78px;font-size:22px;color:#000;">12</div>
<div class="t" style="left:11.27px;top:708.78px;font-size:22px;color:#000;">13</div>
<div class="t" style="left:11.27px;top:736.78px;font-size:22px;color:#000;">14</div>
<div class="t" style="left:11.27px;top:764.78px;font-size:22px;color:#000;">15</div>
<div class="t" style="left:11.27px;top:792.78px;font-size:22px;color:#000;">16</div>
<div class="t" style="left:11.27px;top:820.78px;font-size:22px;color:#000;">17</div>
<div class="t" style="left:11.27px;top:848.78px;font-size:22px;color:#000;">18</div>
<div class="t" style="left:11.27px;top:876.78px;font-size:22px;color:#000;">19</div>
<div class="t" style="left:11.27px;top:904.78px;font-size:22px;color:#000;">20</div>
<div class="t" style="left:11.27px;top:932.78px;font-size:22px;color:#000;">21</div>
<div class="t" style="left:11.27px;top:960.78px;font-size:22px;color:#000;">22</div>
<div class="t" style="left:11.27px;top:988.78px;font-size:22px;color:#000;">23</div>
<div class="t" style="left:11.27px;top:1016.78px;font-size:22px;color:#000;">24</div>
<div class="t" style="left:11.27px;top:1044.78px;font-size:22px;color:#000;">25</div>
<div class="t" style="left:11.27px;top:1072.78px;font-size:22px;color:#000;">26</div>
<div class="t" style="left:11.27px;top:1100.78px;font-size:22px;color:#000;">27</div>
<div class="t" style="left:11.27px;top:1128.78px;font-size:22px;color:#000;">28</div>
<div class="t" style="left:11.27px;top:1156.78px;font-size:22px;color:#000;">29</div>
<div class="t" style="left:11.27px;top:1184.78px;font-size:22px;color:#000;">30</div>
<div class="t" style="left:11.27px;top:1212.78px;font-size:22px;color:#000;">31</div>
<div class="t" style="left:11.27px;top:1240.78px;font-size:22px;color:#000;">32</div>
<div class="t" style="left:11.27px;top:1268.78px;font-size:22px;color:#000;">33</div>
<div class="t" style="left:11.27px;top:1296.78px;font-size:22px;color:#000;">34</div>
<div class="t" style="left:11.27px;top:1324.78px;font-size:22px;color:#000;">35</div>
<div class="t" style="left:11.27px;top:1352.78px;font-size:22px;color:#000;">36</div>
<div class="t" style="left:11.27px;top:1380.78px;font-size:22px;color:#000;">37</div>
<div class="t" style="left:11.27px;top:1408.78px;font-size:22px;color:#000;">38</div>
<div class="t" style="left:11.27px;top:1436.78px;font-size:22px;color:#000;">39</div>
<div class="t" style="left:11.27px;top:1464.78px;font-size:22px;color:#000;">40</div>
<div class="t" style="left:11.27px;top:1492.78px;font-size:22px;color:#000;">41</div>
<div class="t" style="left:11.27px;top:1520.78px;font-size:22px;color:#000;">42</div>
<svg style="left:21.70px;top:334.40px;" width="19.40" height="19.50" viewBox="0 0 19.4 19.5"><polygon points="19.4,0 19.4,19.5 0,19.5" fill="#bfbfbf"/></svg>
<div class="t" style="left:155.70px;top:447.15px;font-size:29px;color:#b8002e;font-weight:700;transform:scaleX(1.0346);transform-origin:left top;">Analysis: Users per weekday over time</div>
<div style="left:150.00px;top:479.00px;width:1029.00px;height:2.80px;background:#b8002e;"></div>
<div style="left:150.00px;top:509.00px;width:1029.00px;height:29.00px;background:#b8002e;"></div>
<div style="left:150.00px;top:537.00px;width:133.00px;height:29.00px;background:#b8002e;"></div>
<div style="left:150.00px;top:565.00px;width:133.00px;height:29.00px;background:#b8002e;"></div>
<div style="left:150.00px;top:593.00px;width:133.00px;height:29.00px;background:#b8002e;"></div>
<div style="left:150.00px;top:621.00px;width:133.00px;height:29.00px;background:#b8002e;"></div>
<div style="left:150.00px;top:649.00px;width:133.00px;height:29.00px;background:#b8002e;"></div>
<div style="left:150.00px;top:537.00px;width:1029.00px;height:1.00px;background:#8c8c8c;"></div>
<div style="left:150.00px;top:565.00px;width:1029.00px;height:1.00px;background:#8c8c8c;"></div>
<div style="left:150.00px;top:593.00px;width:1029.00px;height:1.00px;background:#8c8c8c;"></div>
<div style="left:150.00px;top:621.00px;width:1029.00px;height:1.00px;background:#8c8c8c;"></div>
<div style="left:150.00px;top:649.00px;width:1029.00px;height:1.00px;background:#8c8c8c;"></div>
<div style="left:150.00px;top:677.00px;width:1029.00px;height:1.00px;background:#8c8c8c;"></div>
<div style="left:150.00px;top:509.00px;width:1.00px;height:169.00px;background:#8c8c8c;"></div>
<div style="left:282.00px;top:509.00px;width:1.00px;height:169.00px;background:#8c8c8c;"></div>
<div style="left:410.00px;top:509.00px;width:1.00px;height:169.00px;background:#8c8c8c;"></div>
<div style="left:538.00px;top:509.00px;width:1.00px;height:169.00px;background:#8c8c8c;"></div>
<div style="left:666.00px;top:509.00px;width:1.00px;height:169.00px;background:#8c8c8c;"></div>
<div style="left:794.00px;top:509.00px;width:1.00px;height:169.00px;background:#8c8c8c;"></div>
<div style="left:922.00px;top:509.00px;width:1.00px;height:169.00px;background:#8c8c8c;"></div>
<div style="left:1050.00px;top:509.00px;width:1.00px;height:169.00px;background:#8c8c8c;"></div>
<div style="left:1178.00px;top:509.00px;width:1.00px;height:169.00px;background:#8c8c8c;"></div>
<div style="left:150.00px;top:509.00px;width:1029.00px;height:1.00px;background:#8c8c8c;"></div>
<div class="t" style="left:203.78px;top:513.57px;font-size:20px;color:#fff;font-weight:700;">[k]</div>
<div class="t" style="left:308.23px;top:513.57px;font-size:20px;color:#fff;font-weight:700;">Monday</div>
<div class="t" style="left:434.18px;top:513.57px;font-size:20px;color:#fff;font-weight:700;">Tuesday</div>
<div class="t" style="left:546.61px;top:513.57px;font-size:20px;color:#fff;font-weight:700;">Wednesday</div>
<div class="t" style="left:684.99px;top:513.57px;font-size:20px;color:#fff;font-weight:700;">Thursday</div>
<div class="t" style="left:827.99px;top:513.57px;font-size:20px;color:#fff;font-weight:700;">Friday</div>
<div class="t" style="left:943.21px;top:513.57px;font-size:20px;color:#fff;font-weight:700;">Saturday</div>
<div class="t" style="left:1077.88px;top:513.57px;font-size:20px;color:#fff;font-weight:700;">Sunday</div>
<div class="t" style="left:193.76px;top:541.07px;font-size:20px;color:#fff;font-weight:700;">2017</div>
<div class="t" style="left:356.96px;top:540.57px;font-size:20px;color:#000;">2,091</div>
<div class="t" style="left:484.96px;top:540.57px;font-size:20px;color:#000;">2,412</div>
<div class="t" style="left:612.96px;top:540.57px;font-size:20px;color:#000;">2,459</div>
<div class="t" style="left:740.96px;top:540.57px;font-size:20px;color:#000;">2,397</div>
<div class="t" style="left:868.96px;top:540.57px;font-size:20px;color:#000;">2,027</div>
<div class="t" style="left:1013.63px;top:540.57px;font-size:20px;color:#000;">683</div>
<div class="t" style="left:1141.63px;top:540.57px;font-size:20px;color:#000;">619</div>
<div class="t" style="left:193.76px;top:569.07px;font-size:20px;color:#fff;font-weight:700;">2018</div>
<div class="t" style="left:356.96px;top:568.57px;font-size:20px;color:#000;">4,828</div>
<div class="t" style="left:484.96px;top:568.57px;font-size:20px;color:#000;">5,588</div>
<div class="t" style="left:612.96px;top:568.57px;font-size:20px;color:#000;">5,589</div>
<div class="t" style="left:740.96px;top:568.57px;font-size:20px;color:#000;">5,517</div>
<div class="t" style="left:868.96px;top:568.57px;font-size:20px;color:#000;">4,734</div>
<div class="t" style="left:996.96px;top:568.57px;font-size:20px;color:#000;">1,491</div>
<div class="t" style="left:1124.96px;top:568.57px;font-size:20px;color:#000;">1,365</div>
<div class="t" style="left:193.76px;top:597.07px;font-size:20px;color:#fff;font-weight:700;">2019</div>
<div class="t" style="left:356.96px;top:596.57px;font-size:20px;color:#000;">5,668</div>
<div class="t" style="left:484.96px;top:596.57px;font-size:20px;color:#000;">6,310</div>
<div class="t" style="left:612.96px;top:596.57px;font-size:20px;color:#000;">6,469</div>
<div class="t" style="left:740.96px;top:596.57px;font-size:20px;color:#000;">6,330</div>
<div class="t" style="left:868.96px;top:596.57px;font-size:20px;color:#000;">5,426</div>
<div class="t" style="left:996.96px;top:596.57px;font-size:20px;color:#000;">1,592</div>
<div class="t" style="left:1124.96px;top:596.57px;font-size:20px;color:#000;">1,503</div>
<div class="t" style="left:193.76px;top:625.07px;font-size:20px;color:#fff;font-weight:700;">2020</div>
<div class="t" style="left:358.44px;top:624.57px;font-size:20px;color:#000;">5,811</div>
<div class="t" style="left:484.96px;top:624.57px;font-size:20px;color:#000;">6,543</div>
<div class="t" style="left:612.96px;top:624.57px;font-size:20px;color:#000;">6,441</div>
<div class="t" style="left:740.96px;top:624.57px;font-size:20px;color:#000;">6,364</div>
<div class="t" style="left:868.96px;top:624.57px;font-size:20px;color:#000;">5,463</div>
<div class="t" style="left:996.96px;top:624.57px;font-size:20px;color:#000;">1,994</div>
<div class="t" style="left:1124.96px;top:624.57px;font-size:20px;color:#000;">1,937</div>
<div class="t" style="left:193.76px;top:653.07px;font-size:20px;color:#fff;font-weight:700;">2021</div>
<div class="t" style="left:356.96px;top:652.57px;font-size:20px;color:#000;">6,060</div>
<div class="t" style="left:484.96px;top:652.57px;font-size:20px;color:#000;">6,733</div>
<div class="t" style="left:612.96px;top:652.57px;font-size:20px;color:#000;">6,953</div>
<div class="t" style="left:740.96px;top:652.57px;font-size:20px;color:#000;">6,879</div>
<div class="t" style="left:868.96px;top:652.57px;font-size:20px;color:#000;">5,520</div>
<div class="t" style="left:996.96px;top:652.57px;font-size:20px;color:#000;">2,232</div>
<div class="t" style="left:1124.96px;top:652.57px;font-size:20px;color:#000;">2,133</div>
<div style="left:149.00px;top:508.00px;width:134.80px;height:31.00px;border:2.7px solid #107c41;box-sizing:border-box;"></div>
<div style="left:151.70px;top:510.70px;width:129.40px;height:25.60px;border:1px solid #fff;box-sizing:border-box;"></div>
<div style="left:278.50px;top:533.50px;width:8.00px;height:8.00px;background:#107c41;border:1px solid #fff;box-sizing:border-box;"></div>
<div style="left:2.00px;top:1542.00px;width:2903.00px;height:48.00px;background:#f0f0f0;"></div>
<div style="left:2.00px;top:1542.00px;width:2903.00px;height:1.00px;background:#e3e3e3;"></div>
<div class="t" style="left:182.40px;top:1558.92px;font-size:19px;color:#303030;transform:scaleX(1.1473);transform-origin:left top;">Introduction</div>
<div style="left:324.00px;top:1548.00px;width:118.70px;height:36.00px;background:#d6d6d6;border-radius:6px;"></div>
<div class="t" style="left:337.20px;top:1558.92px;font-size:19px;color:#303030;transform:scaleX(1.1572);transform-origin:left top;">Admin--&gt;</div>
<div style="left:456.00px;top:1548.00px;width:100.60px;height:36.00px;background:#d6d6d6;border-radius:6px;"></div>
<div class="t" style="left:469.30px;top:1558.92px;font-size:19px;color:#303030;transform:scaleX(1.0779);transform-origin:left top;">Settings</div>
<div style="left:570.00px;top:1548.00px;width:123.00px;height:36.00px;background:#b8002e;border-radius:6px;"></div>
<div class="t" style="left:583.50px;top:1558.92px;font-size:19px;color:#fff;transform:scaleX(1.0826);transform-origin:left top;">Results--&gt;</div>
<div style="left:831.80px;top:1548.00px;width:161.90px;height:36.00px;background:#b8002e;border-radius:6px;"></div>
<div class="t" style="left:847.40px;top:1558.92px;font-size:19px;color:#fff;transform:scaleX(1.0324);transform-origin:left top;">Overview_VBA</div>
<div style="left:1007.00px;top:1548.00px;width:187.80px;height:36.00px;background:#b8002e;border-radius:6px;"></div>
<div class="t" style="left:1022.00px;top:1558.92px;font-size:19px;color:#fff;transform:scaleX(1.0516);transform-origin:left top;">Overview_Add_In</div>
<div style="left:1208.00px;top:1548.00px;width:94.70px;height:36.00px;background:#ff6a00;border-radius:6px;"></div>
<div class="t" style="left:1220.00px;top:1558.92px;font-size:19px;color:#fff;transform:scaleX(1.0881);transform-origin:left top;">Calc--&gt;</div>
<div style="left:1316.00px;top:1548.00px;width:132.70px;height:36.00px;background:#ff6a00;border-radius:6px;"></div>
<div class="t" style="left:1329.00px;top:1558.92px;font-size:19px;color:#fff;transform:scaleX(1.0112);transform-origin:left top;">Calc_Charts</div>
<div style="left:1462px;top:1548px;width:167px;height:36px;background:#ff6a00;border-radius:6px 0 0 6px;overflow:hidden;"><div class="t" style="left:14.6px;top:10.92px;font-size:19px;color:#fff;transform:scaleX(1.013);transform-origin:left top;">Data_Consolidation</div></div>
<div style="left:706.50px;top:1543.00px;width:111.50px;height:41.00px;background:linear-gradient(#fdf5f7,#f3c9d3);border-radius:0 0 6px 6px;box-shadow:0 1px 2px rgba(0,0,0,0.15);"></div>
<div class="t" style="left:718.00px;top:1553.92px;font-size:19px;color:#000;transform:scaleX(1.1165);transform-origin:left top;">Overview</div>
<div style="left:718.00px;top:1577.00px;width:89.00px;height:3.00px;background:#107c41;border-radius:1px;"></div>
<div style="left:317.30px;top:1555.00px;width:1.00px;height:22.00px;background:#c9c9c9;"></div>
<div style="left:449.70px;top:1555.00px;width:1.00px;height:22.00px;background:#c9c9c9;"></div>
<div style="left:563.60px;top:1555.00px;width:1.00px;height:22.00px;background:#c9c9c9;"></div>
<div style="left:700.00px;top:1555.00px;width:1.00px;height:22.00px;background:#c9c9c9;"></div>
<div style="left:825.60px;top:1555.00px;width:1.00px;height:22.00px;background:#c9c9c9;"></div>
<div style="left:1000.30px;top:1555.00px;width:1.00px;height:22.00px;background:#c9c9c9;"></div>
<div style="left:1201.40px;top:1555.00px;width:1.00px;height:22.00px;background:#c9c9c9;"></div>
<div style="left:1309.30px;top:1555.00px;width:1.00px;height:22.00px;background:#c9c9c9;"></div>
<div style="left:1455.30px;top:1555.00px;width:1.00px;height:22.00px;background:#c9c9c9;"></div>
<div style="left:1773.00px;top:1553.00px;width:1102.00px;height:25.00px;background:#f7f7f7;border-radius:12px;"></div>
<div style="left:1798.50px;top:1560.00px;width:1010.50px;height:12.00px;background:#707070;border-radius:6px;"></div>
<div style="left:2.00px;top:1590.00px;width:2903.00px;height:34.00px;background:#f3f3f3;"></div>
<div style="left:2.00px;top:1590.00px;width:2903.00px;height:1.00px;background:#d9d9d9;"></div>
<div class="t" style="left:12.20px;top:1599.41px;font-size:17px;color:#303030;transform:scaleX(0.8547);transform-origin:left top;">Ready</div>
<div class="t" style="left:156.50px;top:1599.41px;font-size:17px;color:#303030;transform:scaleX(0.9010);transform-origin:left top;">Accessibility: Good to go</div>
<div class="t" style="left:2305.00px;top:1599.41px;font-size:17px;color:#303030;transform:scaleX(0.9107);transform-origin:left top;">Display Settings</div>
<div style="left:2443.00px;top:1591.00px;width:60.00px;height:33.00px;background:#e0e0e0;"></div>
<div class="t" style="left:2838.00px;top:1599.41px;font-size:17px;color:#303030;transform:scaleX(0.8970);transform-origin:left top;">100%</div>
<div style="left:2650.50px;top:1606.30px;width:148.00px;height:1.40px;background:#555;"></div>
<div style="left:2720.00px;top:1599.00px;width:9.00px;height:15.70px;background:#555;border-radius:2px;"></div>
<div style="left:2876.00px;top:330.00px;width:28.00px;height:1213.00px;background:#f3f3f3;border-radius:12px;"></div>
<div style="left:2884.00px;top:356.00px;width:12.00px;height:1133.00px;background:#707070;border-radius:6px;"></div>
<svg style="left:37.00px;top:1557.50px;" width="10.00" height="15.50" viewBox="0 0 10 15.5"><path d="M9,0.8 L1.2,7.75 L9,14.7" fill="none" stroke="#a0a0a0" stroke-width="1.5"/></svg>
<svg style="left:86.00px;top:1557.50px;" width="10.00" height="15.50" viewBox="0 0 10 15.5"><path d="M1,0.8 L8.8,7.75 L1,14.7" fill="none" stroke="#333" stroke-width="1.5"/></svg>
<div style="left:1643.90px;top:1563.50px;width:3.20px;height:3.20px;background:#333;border-radius:50%;"></div>
<div style="left:1650.90px;top:1563.50px;width:3.20px;height:3.20px;background:#333;border-radius:50%;"></div>
<div style="left:1657.90px;top:1563.50px;width:3.20px;height:3.20px;background:#333;border-radius:50%;"></div>
<svg style="left:1692.00px;top:1558.00px;" width="17.00" height="15.00" viewBox="0 0 17 15"><path d="M8.5,0 V15 M0,7.5 H17" stroke="#333" stroke-width="1.5"/></svg>
<div style="left:1747.00px;top:1557.80px;width:2.50px;height:2.50px;background:#b5b5b5;border-radius:50%;"></div>
<div style="left:1747.00px;top:1563.80px;width:2.50px;height:2.50px;background:#b5b5b5;border-radius:50%;"></div>
<div style="left:1747.00px;top:1569.80px;width:2.50px;height:2.50px;background:#b5b5b5;border-radius:50%;"></div>
<svg style="left:1780.00px;top:1559.50px;" width="11.00" height="13.00" viewBox="0 0 11 13"><path d="M10.5,0.5 V12.5 L0.5,6.5 Z" fill="#555"/></svg>
<svg style="left:2859.00px;top:1559.50px;" width="11.00" height="13.00" viewBox="0 0 11 13"><path d="M0.5,0.5 V12.5 L10.5,6.5 Z" fill="#555"/></svg>
<svg style="left:2883.00px;top:338.00px;" width="14.00" height="10.00" viewBox="0 0 14 10"><path d="M7,0.5 L13.5,9.5 H0.5 Z" fill="#6d6d6d" stroke="#6d6d6d" stroke-linejoin="round"/></svg>
<svg style="left:2883.00px;top:1526.50px;" width="14.00" height="10.00" viewBox="0 0 14 10"><path d="M0.5,0.5 H13.5 L7,9.5 Z" fill="#6d6d6d" stroke="#6d6d6d" stroke-linejoin="round"/></svg>
<svg style="left:84.00px;top:1598.50px;" width="21.00" height="18.00" viewBox="0 0 21 18"><path d="M8,17 H0.8 V0.8 H20 V7" fill="none" stroke="#333" stroke-width="1.6"/><path d="M0.8,4.5 H20 M4,8 H10 M4,11.5 H8" fill="none" stroke="#333" stroke-width="1.6"/><circle cx="15" cy="12.5" r="4.5" fill="none" stroke="#333" stroke-width="1.6"/><circle cx="15" cy="12.5" r="2.2" fill="#444"/></svg>
<svg style="left:130.00px;top:1596.00px;" width="24.00" height="23.00" viewBox="0 0 24 23"><circle cx="9.5" cy="3.5" r="2.6" fill="none" stroke="#333" stroke-width="1.6"/><path d="M1.5,6.5 Q4,9.5 7,8 H12 Q15,9.5 17.5,6.5 M8,8.5 Q7,13 9,15 Q6,19 5,21.5 M11,8.5 V13" fill="none" stroke="#333" stroke-width="1.6"/><path d="M12.5,17 L15.5,20.5 L22,13.5" fill="none" stroke="#333" stroke-width="1.6"/></svg>
<svg style="left:2279.00px;top:1597.00px;" width="22.00" height="20.00" viewBox="0 0 22 20"><path d="M9,14.5 H0.8 V0.8 H20.5 V8" fill="none" stroke="#333" stroke-width="1.6"/><path d="M5,18 H9" fill="none" stroke="#333" stroke-width="1.6"/><circle cx="15.5" cy="14" r="3.5" fill="none" stroke="#333" stroke-width="1.6"/><path d="M15.5,8.5 V10 M15.5,18 V19.5 M10,14 H11.5 M19.5,14 H21" fill="none" stroke="#333" stroke-width="1.6"/></svg>
<svg style="left:2461.50px;top:1597.50px;" width="21.00" height="19.00" viewBox="0 0 21 19"><path d="M1,0.8 H20 M1,6.5 H20 M1,12 H20 M1,18 H20 M1,0.8 V18 M7.3,0.8 V18 M13.6,0.8 V18 M20,0.8 V18" fill="none" stroke="#333" stroke-width="1.6"/></svg>
<svg style="left:2522.50px;top:1597.50px;" width="22.00" height="19.00" viewBox="0 0 22 19"><rect x="0.8" y="0.8" width="20.4" height="17.4" fill="none" stroke="#333" stroke-width="1.6"/><rect x="4.5" y="4" width="13" height="11" fill="none" stroke="#333" stroke-width="1.6"/><path d="M7,7.5 H15 M7,10.5 H15" fill="none" stroke="#333" stroke-width="1.6"/></svg>
<svg style="left:2582.00px;top:1597.50px;" width="22.00" height="19.00" viewBox="0 0 22 19"><rect x="0.8" y="0.8" width="20.4" height="17.4" fill="none" stroke="#333" stroke-width="1.6"/><path d="M11,0.8 V8 H7 V0.8 M11,8 H15 V0.8" fill="none" stroke="#333" stroke-width="1.6"/></svg>
<div style="left:2630.50px;top:1606.30px;width:12.50px;height:1.40px;background:#444;"></div>
<svg style="left:2806.00px;top:1600.00px;" width="14.00" height="14.00" viewBox="0 0 14 14"><path d="M7,0 V14 M0,7 H14" stroke="#444" stroke-width="1.4"/></svg>
<div id="frame"></div>
</div></body></html>
